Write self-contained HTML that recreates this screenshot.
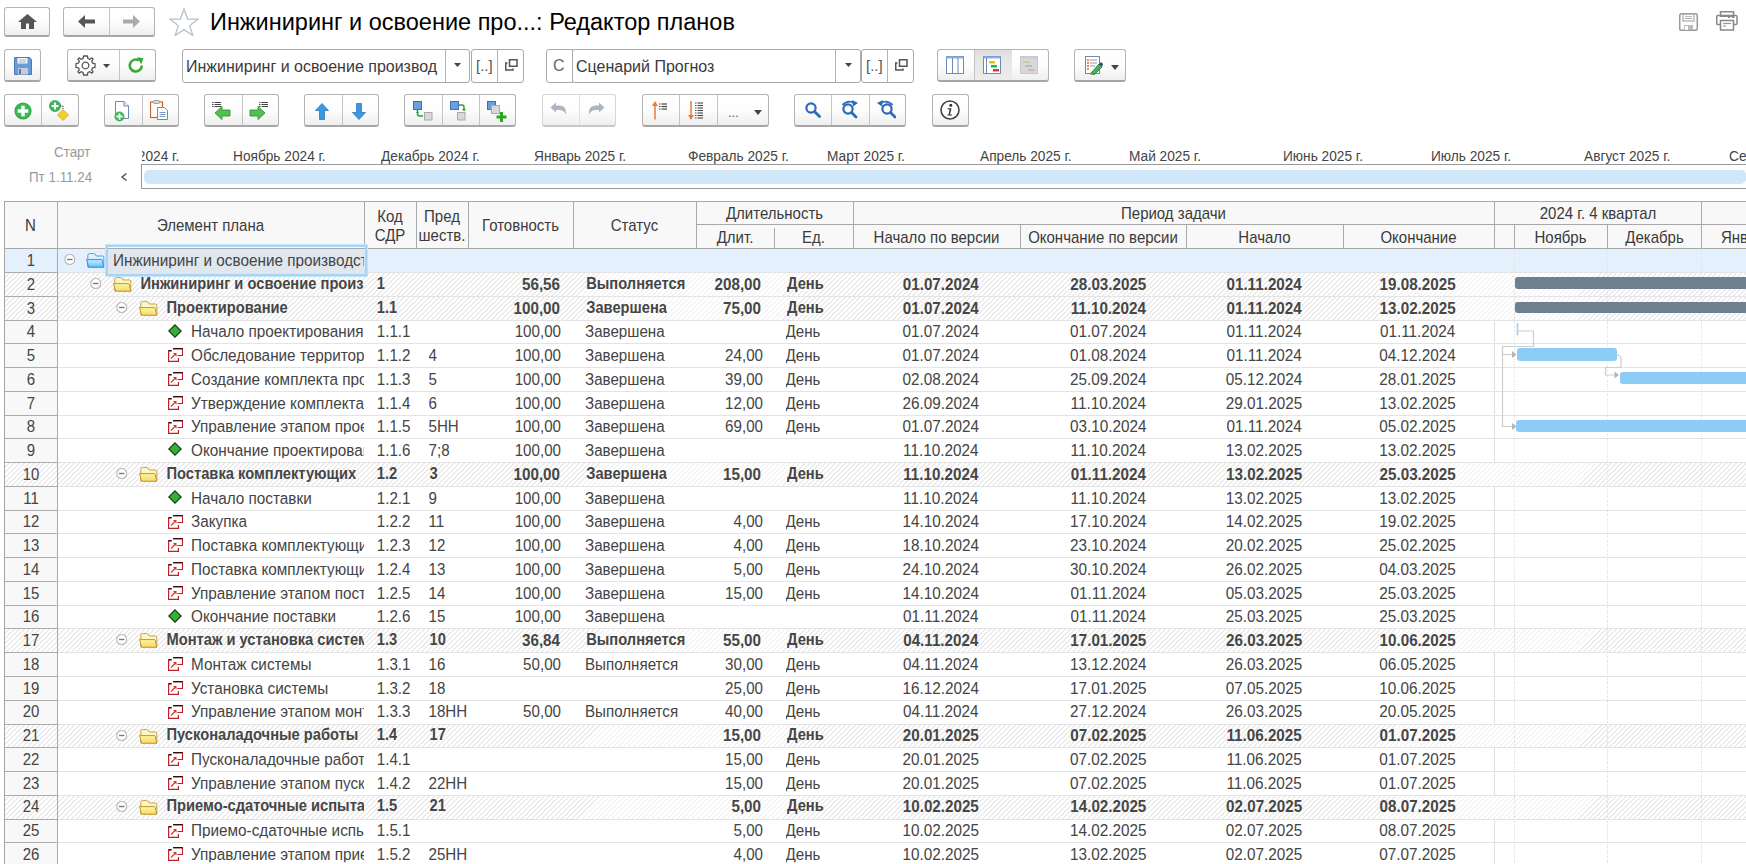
<!DOCTYPE html><html><head><meta charset="utf-8"><title>Редактор планов</title><style>
*{box-sizing:border-box;margin:0;padding:0}
html,body{width:1746px;height:864px;overflow:hidden;background:#fff}
body{position:relative;font-family:"Liberation Sans",sans-serif;color:#333}
.abs{position:absolute}
.btn{position:absolute;border:1px solid #b4b4b4;border-bottom:2px solid #a6a6a6;border-radius:3px;
 background:linear-gradient(#ffffff 0%,#fdfdfd 50%,#efefef 100%);}
.dv{position:absolute;top:0;bottom:0;width:1px;background:#c4c4c4}
.ic{position:absolute}
.fld{position:absolute;border:1px solid #a9a9a9;border-radius:3px;background:#fff}
.t{position:absolute;white-space:nowrap;line-height:1}
.hd{position:absolute;background:#f8f8f8}
.hl{position:absolute;background:#a9a9a9}
.row{position:absolute;left:5px;width:1741px}
.cell{position:absolute;white-space:nowrap;overflow:hidden;font-size:15.15px;line-height:1;transform:scaleY(1.11);transform-origin:0 12.8px;color:#444}
.b{font-weight:bold;color:#464646;font-size:14.7px}
.sy{transform:scaleY(1.12);transform-origin:0 12.7px}
.hatch{background:repeating-linear-gradient(135deg,#ffffff 0px,#ffffff 2.3px,#ebebeb 2.3px,#ebebeb 3.54px)}
.hatch2{background:repeating-linear-gradient(135deg,#ffffff 0px,#ffffff 2.1px,#dedede 2.1px,#dedede 3.54px)}
</style></head><body>
<div class="btn" style="left:4px;top:7px;width:46px;height:30px;"></div>
<svg class="ic" style="left:18px;top:14px" width="19" height="15" viewBox="0 0 19 15"><path d="M9.5 0 L19 8 L16 8 L16 15 L11 15 L11 9.5 L8 9.5 L8 15 L3 15 L3 8 L0 8 Z" fill="#555"/></svg>
<div class="btn" style="left:63px;top:7px;width:92px;height:30px;"><div class="dv" style="left:45px"></div></div>
<svg class="ic" style="left:78px;top:15px" width="18" height="13" viewBox="0 0 18 13"><path d="M0 6.5 L7 0 L7 4.5 L17 4.5 L17 8.5 L7 8.5 L7 13 Z" fill="#555"/></svg>
<svg class="ic" style="left:122px;top:15px" width="18" height="13" viewBox="0 0 18 13"><path d="M18 6.5 L11 0 L11 4.5 L1 4.5 L1 8.5 L11 8.5 L11 13 Z" fill="#aaa"/></svg>
<svg class="ic" style="left:169px;top:8px" width="30" height="28" viewBox="0 0 30 28"><path d="M15 1 L18.6 11 L29 11.2 L20.8 17.6 L23.8 27.5 L15 21.6 L6.2 27.5 L9.2 17.6 L1 11.2 L11.4 11 Z" fill="#fff" stroke="#b9c0ca" stroke-width="1.3" stroke-linejoin="miter"/></svg>
<div class="t" style="left:210px;top:11.2px;font-size:23.5px;color:#000;font-weight:400;">Инжиниринг и освоение про...: Редактор планов</div>
<svg class="ic" style="left:1679px;top:13px" width="19" height="18" viewBox="0 0 19 18"><rect x="0.75" y="0.75" width="17.5" height="16.5" rx="1.5" fill="none" stroke="#999" stroke-width="1.5"/><rect x="4" y="1" width="11" height="7" fill="none" stroke="#aaa" stroke-width="1.2"/><line x1="6" y1="3.5" x2="13" y2="3.5" stroke="#bbb"/><line x1="6" y1="5.5" x2="13" y2="5.5" stroke="#aaa"/><rect x="5" y="12" width="9" height="5" fill="#bbb"/><rect x="6" y="13" width="3" height="4" fill="#fff"/></svg>
<svg class="ic" style="left:1716px;top:11px" width="22" height="20" viewBox="0 0 22 20"><rect x="4.5" y="0.75" width="13" height="4.5" fill="none" stroke="#888" stroke-width="1.5"/><path d="M4 13.5 H1.5 a1 1 0 0 1 -0.75 -0.75 V5.5 a1 1 0 0 1 1 -1 H20 a1 1 0 0 1 1 1 V12.5 a1 1 0 0 1 -1 1 H18" fill="none" stroke="#888" stroke-width="1.5"/><rect x="4.5" y="9.5" width="13" height="9.5" fill="#fff" stroke="#888" stroke-width="1.5"/><line x1="7" y1="12.5" x2="15" y2="12.5" stroke="#999" stroke-width="1.2"/><line x1="7" y1="15" x2="10" y2="15" stroke="#999" stroke-width="1.2"/><line x1="12" y1="6.5" x2="14" y2="6.5" stroke="#888"/><line x1="16" y1="6.5" x2="18.5" y2="6.5" stroke="#888"/></svg>
<div class="btn" style="left:4px;top:49px;width:37px;height:33px;"></div>
<svg class="ic" style="left:14px;top:57px" width="18" height="18" viewBox="0 0 18 18"><path d="M0.5 0.5 H15.5 L17.5 2.5 V17.5 H0.5 Z" fill="#6a9ad8" stroke="#4a78b8"/><rect x="3.5" y="1" width="10" height="5.5" fill="#f4f6fa"/><line x1="5" y1="3" x2="12" y2="3" stroke="#8aa8cc" stroke-width="0.8"/><line x1="5" y1="5" x2="12" y2="5" stroke="#8aa8cc" stroke-width="0.8"/><rect x="4" y="11" width="10" height="6.5" fill="#c8ccd4"/><rect x="5" y="12" width="2" height="5" fill="#4a78b8"/></svg>
<div class="btn" style="left:67px;top:49px;width:89px;height:33px;"><div class="dv" style="left:51px"></div></div>
<svg class="ic" style="left:75px;top:55px" width="21" height="21" viewBox="0 0 21 21"><g transform="translate(10.5,10.5)"><path d="M-1.9 -9.5 H1.9 L2.4 -7 L4.3 -6.2 L6.4 -7.6 L7.6 -6.4 L6.2 -4.3 L7 -2.4 L9.5 -1.9 V1.9 L7 2.4 L6.2 4.3 L7.6 6.4 L6.4 7.6 L4.3 6.2 L2.4 7 L1.9 9.5 H-1.9 L-2.4 7 L-4.3 6.2 L-6.4 7.6 L-7.6 6.4 L-6.2 4.3 L-7 2.4 L-9.5 1.9 V-1.9 L-7 -2.4 L-6.2 -4.3 L-7.6 -6.4 L-6.4 -7.6 L-4.3 -6.2 L-2.4 -7 Z" fill="#fff" stroke="#555" stroke-width="1.3" stroke-linejoin="round"/><circle r="3.3" fill="#fff" stroke="#555" stroke-width="1.3"/></g></svg>
<svg class="ic" style="left:103px;top:64px" width="7" height="4" viewBox="0 0 7 4"><path d="M0 0 H7 L3.5 4 Z" fill="#444"/></svg>
<svg class="ic" style="left:128px;top:57px" width="17" height="18" viewBox="0 0 17 18"><path d="M13.8 8.5 A6 6 0 1 1 10.8 3.3" fill="none" stroke="#3aa83a" stroke-width="2.6"/><path d="M9 0.2 L15.5 1.2 L13.2 7.2 Z" fill="#3aa83a"/></svg>
<div class="fld" style="left:182px;top:49px;width:288px;height:34px"><div class="dv" style="left:262px;background:#b5b5b5"></div></div>
<div class="t" style="left:186px;top:59px;font-size:16px;color:#3a3a3a;font-weight:400;transform:scaleY(1.06);transform-origin:0 13.5px">Инжиниринг и освоение производ</div>
<svg class="ic" style="left:454px;top:63px" width="7" height="4" viewBox="0 0 7 4"><path d="M0 0 H7 L3.5 4 Z" fill="#444"/></svg>
<div class="fld" style="left:471px;top:49px;width:53px;height:34px"><div class="dv" style="left:25px;background:#b5b5b5"></div></div>
<div class="t" style="left:476px;top:58px;font-size:15px;color:#555;font-weight:400;">[..]</div>
<svg class="ic" style="left:505px;top:59px" width="13" height="12" viewBox="0 0 13 12"><rect x="4.5" y="0.75" width="7.5" height="6.5" fill="none" stroke="#555" stroke-width="1.5"/><path d="M2.5 4 H0.75 V11 H8 V9.5" fill="none" stroke="#555" stroke-width="1.5"/></svg>
<div class="fld" style="left:546px;top:49px;width:27px;height:34px;border-radius:3px 0 0 3px"></div>
<div class="t" style="left:553px;top:58px;font-size:16px;color:#666;font-weight:400;">С</div>
<div class="fld" style="left:572px;top:49px;width:289px;height:34px"><div class="dv" style="left:262px;background:#b5b5b5"></div></div>
<div class="t" style="left:576px;top:59px;font-size:16px;color:#3a3a3a;font-weight:400;transform:scaleY(1.06);transform-origin:0 13.5px">Сценарий Прогноз</div>
<svg class="ic" style="left:845px;top:63px" width="7" height="4" viewBox="0 0 7 4"><path d="M0 0 H7 L3.5 4 Z" fill="#444"/></svg>
<div class="fld" style="left:861px;top:49px;width:53px;height:34px"><div class="dv" style="left:25px;background:#b5b5b5"></div></div>
<div class="t" style="left:866px;top:58px;font-size:15px;color:#555;font-weight:400;">[..]</div>
<svg class="ic" style="left:895px;top:59px" width="13" height="12" viewBox="0 0 13 12"><rect x="4.5" y="0.75" width="7.5" height="6.5" fill="none" stroke="#555" stroke-width="1.5"/><path d="M2.5 4 H0.75 V11 H8 V9.5" fill="none" stroke="#555" stroke-width="1.5"/></svg>
<div class="btn" style="left:937px;top:49px;width:112px;height:33px;"><div class="dv" style="left:36px"></div><div class="dv" style="left:73px"></div></div>
<div class="abs" style="left:975px;top:50px;width:37px;height:30px;background:linear-gradient(#dcdcdc,#e6e6e6 30%,#ececec)"></div>
<svg class="ic" style="left:946px;top:56px" width="18" height="18" viewBox="0 0 18 18"><rect x="0.5" y="0.5" width="17" height="17" fill="#fff" stroke="#6d8bb0"/><rect x="0.5" y="0.5" width="17" height="2" fill="#8ab4e0"/><line x1="6.5" y1="2" x2="6.5" y2="17" stroke="#6d8bb0"/><line x1="12" y1="2" x2="12" y2="17" stroke="#6d8bb0"/></svg>
<svg class="ic" style="left:983px;top:56px" width="18" height="18" viewBox="0 0 18 18"><rect x="0.5" y="0.5" width="17" height="17" fill="#fff" stroke="#6d8bb0"/><rect x="0.5" y="0.5" width="17" height="2" fill="#8ab4e0"/><line x1="3.5" y1="2" x2="3.5" y2="17" stroke="#6d8bb0"/><rect x="6" y="5" width="6" height="2.5" fill="#e8c020"/><rect x="8" y="9" width="6" height="2.5" fill="#28b828"/><rect x="10" y="13" width="6" height="2.5" fill="#e03050"/></svg>
<svg class="ic" style="left:1020px;top:56px" width="18" height="18" viewBox="0 0 18 18"><rect x="0.5" y="0.5" width="17" height="17" fill="#d6d8dc" stroke="#c4c8cc"/><rect x="0.5" y="0.5" width="17" height="2" fill="#c8ccd4"/><rect x="3" y="5" width="7" height="2" fill="#d4c896"/><rect x="5" y="9" width="7" height="2" fill="#a8c8a8"/><rect x="8" y="13" width="7" height="2" fill="#d8b0b8"/></svg>
<div class="btn" style="left:1074px;top:49px;width:52px;height:33px;"></div>
<svg class="ic" style="left:1085px;top:56px" width="18" height="19" viewBox="0 0 18 19"><rect x="0.5" y="0.5" width="14" height="17" fill="#fff" stroke="#6d8bb0"/><circle cx="3" cy="4" r="0.9" fill="#e05030"/><circle cx="3" cy="7" r="0.9" fill="#e05030"/><circle cx="3" cy="10" r="0.9" fill="#e05030"/><circle cx="3" cy="13" r="0.9" fill="#e05030"/><line x1="5" y1="4" x2="12" y2="4" stroke="#999"/><line x1="5" y1="7" x2="12" y2="7" stroke="#999"/><line x1="5" y1="10" x2="10" y2="10" stroke="#999"/><path d="M6 17 L14 8 L17 11 L9 19 Z" fill="#3cb850" stroke="#2a7040" stroke-width="0.8"/><path d="M14 8 L16 6 L18 8 L17 11 Z" fill="#2a5070"/><path d="M6 17 L5 19 L8 18.5Z" fill="#b08040"/></svg>
<svg class="ic" style="left:1111px;top:65px" width="8" height="5" viewBox="0 0 8 5"><path d="M0 0 H8 L4 5 Z" fill="#444"/></svg>
<div class="btn" style="left:4px;top:94px;width:75px;height:33px;"><div class="dv" style="left:36px"></div></div>
<svg class="ic" style="left:14px;top:102px" width="18" height="18" viewBox="0 0 18 18"><circle cx="9" cy="9" r="8.6" fill="#2ea84a"/><circle cx="9" cy="9" r="7.6" fill="#3cb85a"/><rect x="7.3" y="3.7" width="3.4" height="10.6" fill="#fff"/><rect x="3.7" y="7.3" width="10.6" height="3.4" fill="#fff"/></svg>
<svg class="ic" style="left:49px;top:100px" width="22" height="22" viewBox="0 0 22 22"><circle cx="6" cy="6" r="5.6" fill="#3cb85a" stroke="#2a9a48" stroke-width="0.6"/><rect x="5" y="2.6" width="2" height="6.8" fill="#fff"/><rect x="2.6" y="5" width="6.8" height="2" fill="#fff"/><line x1="11.5" y1="6" x2="14" y2="6" stroke="#333" stroke-width="1" stroke-dasharray="1 1"/><line x1="14" y1="6" x2="14" y2="10" stroke="#333" stroke-width="1" stroke-dasharray="1 1"/><path d="M14 9.5 L19.5 15 L14 20.5 L8.5 15 Z" fill="#f0d030" stroke="#d0a818" stroke-width="0.8"/></svg>
<div class="btn" style="left:104px;top:94px;width:75px;height:33px;"><div class="dv" style="left:37px"></div></div>
<svg class="ic" style="left:114px;top:101px" width="16" height="21" viewBox="0 0 16 21"><path d="M1.5 0.5 H10 L14.5 5 V17.5 H1.5 Z" fill="#fff" stroke="#6d8bb0"/><path d="M10 0.5 V5 H14.5" fill="#e8eef6" stroke="#6d8bb0"/><circle cx="5.5" cy="15.5" r="5" fill="#3cb85a"/><rect x="4.6" y="12.4" width="1.8" height="6.2" fill="#fff"/><rect x="2.4" y="14.6" width="6.2" height="1.8" fill="#fff"/></svg>
<svg class="ic" style="left:150px;top:100px" width="19" height="20" viewBox="0 0 19 20"><rect x="0.5" y="2" width="12" height="15.5" fill="#fff" stroke="#c86428" stroke-width="1.2"/><rect x="3.5" y="0.5" width="6" height="3" rx="1" fill="#ddd" stroke="#888" stroke-width="0.8"/><path d="M7.5 7.5 H14.5 L17.5 10.5 V19.5 H7.5 Z" fill="#fff" stroke="#6d8bb0"/><line x1="9.5" y1="12.5" x2="15.5" y2="12.5" stroke="#7a9ac0"/><line x1="9.5" y1="14.5" x2="15.5" y2="14.5" stroke="#7a9ac0"/><line x1="9.5" y1="16.5" x2="15.5" y2="16.5" stroke="#7a9ac0"/></svg>
<div class="btn" style="left:204px;top:94px;width:75px;height:33px;"><div class="dv" style="left:37px"></div></div>
<svg class="ic" style="left:212px;top:101px" width="22" height="19" viewBox="0 0 22 19"><g stroke="#444" stroke-width="1"><line x1="0" y1="1.5" x2="1.5" y2="1.5"/><line x1="2.5" y1="1.5" x2="9" y2="1.5"/><line x1="0" y1="3.5" x2="1.5" y2="3.5"/><line x1="2.5" y1="3.5" x2="9" y2="3.5"/><line x1="0" y1="5.5" x2="1.5" y2="5.5"/><line x1="2.5" y1="5.5" x2="9" y2="5.5"/></g><path d="M3 12 L10 5.5 V9 H18 V15 H10 V18.5 Z" fill="#50c050" stroke="#2a9a38" stroke-width="0.9"/></svg>
<svg class="ic" style="left:247px;top:101px" width="22" height="19" viewBox="0 0 22 19"><g stroke="#444" stroke-width="1"><line x1="12" y1="1.5" x2="13.5" y2="1.5"/><line x1="14.5" y1="1.5" x2="21" y2="1.5"/><line x1="12" y1="3.5" x2="13.5" y2="3.5"/><line x1="14.5" y1="3.5" x2="21" y2="3.5"/><line x1="12" y1="5.5" x2="13.5" y2="5.5"/><line x1="14.5" y1="5.5" x2="21" y2="5.5"/></g><path d="M18 12 L11 5.5 V9 H3 V15 H11 V18.5 Z" fill="#50c050" stroke="#2a9a38" stroke-width="0.9"/></svg>
<div class="btn" style="left:304px;top:94px;width:75px;height:33px;"><div class="dv" style="left:37px"></div></div>
<svg class="ic" style="left:315px;top:103px" width="14" height="17" viewBox="0 0 14 17"><path d="M7 0.5 L13.5 7.5 H9.5 V16.5 H4.5 V7.5 H0.5 Z" fill="#3a98e0" stroke="#2a78c0" stroke-width="0.8"/></svg>
<svg class="ic" style="left:352px;top:103px" width="14" height="17" viewBox="0 0 14 17"><path d="M7 16.5 L13.5 9.5 H9.5 V0.5 H4.5 V9.5 H0.5 Z" fill="#3a98e0" stroke="#2a78c0" stroke-width="0.8"/></svg>
<div class="btn" style="left:404px;top:94px;width:112px;height:33px;"><div class="dv" style="left:37px"></div><div class="dv" style="left:74px"></div></div>
<svg class="ic" style="left:413px;top:101px" width="20" height="20" viewBox="0 0 20 20"><rect x="0.5" y="0.5" width="8" height="8" fill="#6aa0e0" stroke="#3a70b8"/><rect x="11.5" y="11.5" width="7.5" height="7.5" fill="#d8d8d8" stroke="#aaa"/><path d="M4.5 9 V13 Q4.5 15 7 15 H10" fill="none" stroke="#30a030" stroke-width="1.5"/><path d="M3 12 L4.5 9.5 L6 12 Z" fill="#30a030"/></svg>
<svg class="ic" style="left:450px;top:101px" width="20" height="20" viewBox="0 0 20 20"><rect x="0.5" y="0.5" width="8" height="8" fill="#6aa0e0" stroke="#3a70b8"/><rect x="7.5" y="11.5" width="7.5" height="7.5" fill="#d8d8d8" stroke="#aaa"/><path d="M9 4 H12 Q14 4 14 6 V9" fill="none" stroke="#30a030" stroke-width="1.5"/><path d="M12 8 L14 10.5 L16 8 Z" fill="#30a030"/></svg>
<svg class="ic" style="left:487px;top:101px" width="22" height="22" viewBox="0 0 22 22"><rect x="0.5" y="0.5" width="8" height="8" fill="#6aa0e0" stroke="#3a70b8"/><rect x="4.5" y="4.5" width="8" height="8" fill="#d8d8d8" stroke="#aaa"/><rect x="13" y="11" width="3" height="10" fill="#22aa22"/><rect x="9.5" y="14.5" width="10" height="3" fill="#22aa22"/></svg>
<div class="btn" style="left:542px;top:94px;width:74px;height:33px;border-color:#d6d6d6;border-bottom-color:#c8c8c8"><div class="dv" style="left:36px;background:#e0e0e0"></div></div>
<svg class="ic" style="left:550px;top:102px" width="17" height="13" viewBox="0 0 17 13"><path d="M0.5 5.5 L6 0.5 V3.5 H9 Q16 3.5 16 10 V12.5 Q14 8 9 8 H6 V10.5 Z" fill="#adb6c0"/></svg>
<svg class="ic" style="left:588px;top:102px" width="17" height="13" viewBox="0 0 17 13"><path d="M16.5 5.5 L11 0.5 V3.5 H8 Q1 3.5 1 10 V12.5 Q3 8 8 8 H11 V10.5 Z" fill="#adb6c0"/></svg>
<div class="btn" style="left:642px;top:94px;width:127px;height:33px;"><div class="dv" style="left:36px"></div><div class="dv" style="left:74px"></div></div>
<svg class="ic" style="left:652px;top:101px" width="21" height="19" viewBox="0 0 21 19"><line x1="3" y1="2" x2="3" y2="18.5" stroke="#f07830" stroke-width="1.5"/><path d="M0 5 L3 0 L6 5 Z" fill="#f07830"/><g stroke="#444" stroke-width="1.2"><line x1="7" y1="3" x2="8.5" y2="3"/><line x1="9.5" y1="3" x2="15" y2="3"/><line x1="7" y1="5.5" x2="8.5" y2="5.5"/><line x1="9.5" y1="5.5" x2="15" y2="5.5"/><line x1="7" y1="8" x2="8.5" y2="8"/><line x1="9.5" y1="8" x2="15" y2="8"/></g></svg>
<svg class="ic" style="left:688px;top:101px" width="21" height="19" viewBox="0 0 21 19"><line x1="3" y1="0" x2="3" y2="16" stroke="#f07830" stroke-width="1.5"/><path d="M0 14 L3 19 L6 14 Z" fill="#f07830"/><g stroke="#444" stroke-width="1.1"><line x1="7" y1="2" x2="8.5" y2="2"/><line x1="9.5" y1="2" x2="15" y2="2"/><line x1="7" y1="4.5" x2="8.5" y2="4.5"/><line x1="9.5" y1="4.5" x2="15" y2="4.5"/><line x1="7" y1="7" x2="8.5" y2="7"/><line x1="9.5" y1="7" x2="15" y2="7"/><line x1="7" y1="9.5" x2="8.5" y2="9.5"/><line x1="9.5" y1="9.5" x2="15" y2="9.5"/><line x1="7" y1="12" x2="8.5" y2="12"/><line x1="9.5" y1="12" x2="15" y2="12"/><line x1="7" y1="14.5" x2="8.5" y2="14.5"/><line x1="9.5" y1="14.5" x2="15" y2="14.5"/><line x1="7" y1="17" x2="8.5" y2="17"/><line x1="9.5" y1="17" x2="15" y2="17"/></g></svg>
<div class="t" style="left:728px;top:106px;font-size:13px;color:#555;font-weight:400;">...</div>
<svg class="ic" style="left:754px;top:110px" width="8" height="5" viewBox="0 0 8 5"><path d="M0 0 H8 L4 5 Z" fill="#444"/></svg>
<div class="btn" style="left:794px;top:94px;width:112px;height:33px;"><div class="dv" style="left:36px"></div><div class="dv" style="left:74px"></div></div>
<svg class="ic" style="left:805px;top:102px" width="16" height="16" viewBox="0 0 16 16"><circle cx="6" cy="6" r="4.6" fill="none" stroke="#2a6ab8" stroke-width="2.2"/><line x1="9.5" y1="9.5" x2="14.5" y2="14.5" stroke="#2a6ab8" stroke-width="2.8" stroke-linecap="round"/></svg>
<svg class="ic" style="left:841px;top:100px" width="19" height="19" viewBox="0 0 19 19"><circle cx="7" cy="9" r="4.6" fill="none" stroke="#2a6ab8" stroke-width="2.2"/><line x1="10.5" y1="12.5" x2="15" y2="17" stroke="#2a6ab8" stroke-width="2.8" stroke-linecap="round"/><path d="M1.5 5 Q7 -0.5 13 3" fill="none" stroke="#2a6ab8" stroke-width="1.8"/><path d="M11 0 L17 3 L12 6.5 Z" fill="#2a6ab8"/></svg>
<svg class="ic" style="left:877px;top:100px" width="19" height="19" viewBox="0 0 19 19"><circle cx="10" cy="9" r="4.6" fill="none" stroke="#2a6ab8" stroke-width="2.2"/><line x1="13.5" y1="12.5" x2="18" y2="17" stroke="#2a6ab8" stroke-width="2.8" stroke-linecap="round"/><path d="M15.5 5 Q10 -0.5 4 3" fill="none" stroke="#2a6ab8" stroke-width="1.8"/><path d="M6 0 L0 3 L5 6.5 Z" fill="#2a6ab8"/></svg>
<div class="btn" style="left:932px;top:94px;width:37px;height:33px;"></div>
<svg class="ic" style="left:940px;top:100px" width="20" height="20" viewBox="0 0 20 20"><circle cx="10" cy="10" r="9" fill="#fff" stroke="#444" stroke-width="1.6"/><circle cx="10.8" cy="5.2" r="1.5" fill="#333"/><path d="M7.5 8.2 H11.5 L10 14.5 H12 V15.5 H7.5 V14.5 H8.6 L9.6 9.2 H7.5 Z" fill="#333"/></svg>
<div class="t" style="left:54px;top:146px;font-size:13.4px;color:#999;font-weight:400;transform:scaleY(1.08);transform-origin:0 11.35px">Старт</div>
<div class="t" style="left:29px;top:171px;font-size:13.4px;color:#999;font-weight:400;transform:scaleY(1.08);transform-origin:0 11.35px">Пт 1.11.24</div>
<svg class="ic" style="left:121px;top:173px" width="6" height="8" viewBox="0 0 6 8"><path d="M5.5 0.5 L1 4 L5.5 7.5" fill="none" stroke="#444" stroke-width="1.3"/></svg>
<div class="abs" style="left:141.75px;top:140px;width:1605px;height:24px;overflow:hidden">
<div class="t" style="left:-60.75px;top:10.3px;font-size:13.7px;color:#444;font-weight:400;transform:scaleY(1.1);transform-origin:0 11.6px">Октябрь 2024 г.</div>
<div class="t" style="left:91.25px;top:10.3px;font-size:13.7px;color:#444;font-weight:400;transform:scaleY(1.1);transform-origin:0 11.6px">Ноябрь 2024 г.</div>
<div class="t" style="left:239.25px;top:10.3px;font-size:13.7px;color:#444;font-weight:400;transform:scaleY(1.1);transform-origin:0 11.6px">Декабрь 2024 г.</div>
<div class="t" style="left:392.25px;top:10.3px;font-size:13.7px;color:#444;font-weight:400;transform:scaleY(1.1);transform-origin:0 11.6px">Январь 2025 г.</div>
<div class="t" style="left:546.25px;top:10.3px;font-size:13.7px;color:#444;font-weight:400;transform:scaleY(1.1);transform-origin:0 11.6px">Февраль 2025 г.</div>
<div class="t" style="left:685.25px;top:10.3px;font-size:13.7px;color:#444;font-weight:400;transform:scaleY(1.1);transform-origin:0 11.6px">Март 2025 г.</div>
<div class="t" style="left:838.25px;top:10.3px;font-size:13.7px;color:#444;font-weight:400;transform:scaleY(1.1);transform-origin:0 11.6px">Апрель 2025 г.</div>
<div class="t" style="left:987.25px;top:10.3px;font-size:13.7px;color:#444;font-weight:400;transform:scaleY(1.1);transform-origin:0 11.6px">Май 2025 г.</div>
<div class="t" style="left:1141.25px;top:10.3px;font-size:13.7px;color:#444;font-weight:400;transform:scaleY(1.1);transform-origin:0 11.6px">Июнь 2025 г.</div>
<div class="t" style="left:1289.25px;top:10.3px;font-size:13.7px;color:#444;font-weight:400;transform:scaleY(1.1);transform-origin:0 11.6px">Июль 2025 г.</div>
<div class="t" style="left:1442.25px;top:10.3px;font-size:13.7px;color:#444;font-weight:400;transform:scaleY(1.1);transform-origin:0 11.6px">Август 2025 г.</div>
<div class="t" style="left:1587.25px;top:10.3px;font-size:13.7px;color:#444;font-weight:400;transform:scaleY(1.1);transform-origin:0 11.6px">Сентябрь 2025 г.</div>
</div>
<div class="abs" style="left:141px;top:164px;width:1620px;height:25px;border:1px solid #9a9a9a;border-right:none;background:#fff"></div>
<div class="abs" style="left:144px;top:170px;width:1602px;height:14px;border-radius:5px;background:#cfe7f9"></div>
<div class="hd" style="left:4px;top:201px;width:1742px;height:47px"></div>
<div class="abs" style="left:1494px;top:248px;width:1px;height:616px;background:#dedede"></div>
<div class="abs" style="left:5px;top:249px;width:1741px;height:23px;background:#e4f1fc"></div>
<div class="abs" style="left:5px;top:272px;width:52px;height:1px;background:#ababab"></div>
<div class="abs" style="left:57px;top:272px;width:1689px;height:1px;background:#e4e4e4"></div>
<div class="abs hatch" style="left:5px;top:273px;width:1741px;height:23px"></div>
<div class="abs" style="left:5px;top:296px;width:52px;height:1px;background:#ababab"></div>
<div class="abs" style="left:57px;top:296px;width:1689px;height:1px;background:#e4e4e4"></div>
<div class="abs hatch" style="left:5px;top:297px;width:1741px;height:23px"></div>
<div class="abs" style="left:5px;top:320px;width:52px;height:1px;background:#ababab"></div>
<div class="abs" style="left:57px;top:320px;width:1689px;height:1px;background:#e4e4e4"></div>
<div class="abs" style="left:5px;top:321px;width:52px;height:22px;background:#f8f8f8"></div>
<div class="abs" style="left:5px;top:343px;width:52px;height:1px;background:#ababab"></div>
<div class="abs" style="left:57px;top:343px;width:1689px;height:1px;background:#e4e4e4"></div>
<div class="abs" style="left:5px;top:344px;width:52px;height:23px;background:#f8f8f8"></div>
<div class="abs" style="left:5px;top:367px;width:52px;height:1px;background:#ababab"></div>
<div class="abs" style="left:57px;top:367px;width:1689px;height:1px;background:#e4e4e4"></div>
<div class="abs" style="left:5px;top:368px;width:52px;height:23px;background:#f8f8f8"></div>
<div class="abs" style="left:5px;top:391px;width:52px;height:1px;background:#ababab"></div>
<div class="abs" style="left:57px;top:391px;width:1689px;height:1px;background:#e4e4e4"></div>
<div class="abs" style="left:5px;top:392px;width:52px;height:23px;background:#f8f8f8"></div>
<div class="abs" style="left:5px;top:415px;width:52px;height:1px;background:#ababab"></div>
<div class="abs" style="left:57px;top:415px;width:1689px;height:1px;background:#e4e4e4"></div>
<div class="abs" style="left:5px;top:416px;width:52px;height:22px;background:#f8f8f8"></div>
<div class="abs" style="left:5px;top:438px;width:52px;height:1px;background:#ababab"></div>
<div class="abs" style="left:57px;top:438px;width:1689px;height:1px;background:#e4e4e4"></div>
<div class="abs" style="left:5px;top:439px;width:52px;height:23px;background:#f8f8f8"></div>
<div class="abs" style="left:5px;top:462px;width:52px;height:1px;background:#ababab"></div>
<div class="abs" style="left:57px;top:462px;width:1689px;height:1px;background:#e4e4e4"></div>
<div class="abs hatch" style="left:5px;top:463px;width:1741px;height:23px"></div>
<div class="abs" style="left:5px;top:486px;width:52px;height:1px;background:#ababab"></div>
<div class="abs" style="left:57px;top:486px;width:1689px;height:1px;background:#e4e4e4"></div>
<div class="abs" style="left:5px;top:487px;width:52px;height:23px;background:#f8f8f8"></div>
<div class="abs" style="left:5px;top:510px;width:52px;height:1px;background:#ababab"></div>
<div class="abs" style="left:57px;top:510px;width:1689px;height:1px;background:#e4e4e4"></div>
<div class="abs" style="left:5px;top:511px;width:52px;height:22px;background:#f8f8f8"></div>
<div class="abs" style="left:5px;top:533px;width:52px;height:1px;background:#ababab"></div>
<div class="abs" style="left:57px;top:533px;width:1689px;height:1px;background:#e4e4e4"></div>
<div class="abs" style="left:5px;top:534px;width:52px;height:23px;background:#f8f8f8"></div>
<div class="abs" style="left:5px;top:557px;width:52px;height:1px;background:#ababab"></div>
<div class="abs" style="left:57px;top:557px;width:1689px;height:1px;background:#e4e4e4"></div>
<div class="abs" style="left:5px;top:558px;width:52px;height:23px;background:#f8f8f8"></div>
<div class="abs" style="left:5px;top:581px;width:52px;height:1px;background:#ababab"></div>
<div class="abs" style="left:57px;top:581px;width:1689px;height:1px;background:#e4e4e4"></div>
<div class="abs" style="left:5px;top:582px;width:52px;height:23px;background:#f8f8f8"></div>
<div class="abs" style="left:5px;top:605px;width:52px;height:1px;background:#ababab"></div>
<div class="abs" style="left:57px;top:605px;width:1689px;height:1px;background:#e4e4e4"></div>
<div class="abs" style="left:5px;top:606px;width:52px;height:22px;background:#f8f8f8"></div>
<div class="abs" style="left:5px;top:628px;width:52px;height:1px;background:#ababab"></div>
<div class="abs" style="left:57px;top:628px;width:1689px;height:1px;background:#e4e4e4"></div>
<div class="abs hatch" style="left:5px;top:629px;width:1741px;height:23px"></div>
<div class="abs" style="left:5px;top:652px;width:52px;height:1px;background:#ababab"></div>
<div class="abs" style="left:57px;top:652px;width:1689px;height:1px;background:#e4e4e4"></div>
<div class="abs" style="left:5px;top:653px;width:52px;height:23px;background:#f8f8f8"></div>
<div class="abs" style="left:5px;top:676px;width:52px;height:1px;background:#ababab"></div>
<div class="abs" style="left:57px;top:676px;width:1689px;height:1px;background:#e4e4e4"></div>
<div class="abs" style="left:5px;top:677px;width:52px;height:23px;background:#f8f8f8"></div>
<div class="abs" style="left:5px;top:700px;width:52px;height:1px;background:#ababab"></div>
<div class="abs" style="left:57px;top:700px;width:1689px;height:1px;background:#e4e4e4"></div>
<div class="abs" style="left:5px;top:701px;width:52px;height:23px;background:#f8f8f8"></div>
<div class="abs" style="left:5px;top:724px;width:52px;height:1px;background:#ababab"></div>
<div class="abs" style="left:57px;top:724px;width:1689px;height:1px;background:#e4e4e4"></div>
<div class="abs hatch" style="left:5px;top:725px;width:1741px;height:22px"></div>
<div class="abs" style="left:5px;top:747px;width:52px;height:1px;background:#ababab"></div>
<div class="abs" style="left:57px;top:747px;width:1689px;height:1px;background:#e4e4e4"></div>
<div class="abs" style="left:5px;top:748px;width:52px;height:23px;background:#f8f8f8"></div>
<div class="abs" style="left:5px;top:771px;width:52px;height:1px;background:#ababab"></div>
<div class="abs" style="left:57px;top:771px;width:1689px;height:1px;background:#e4e4e4"></div>
<div class="abs" style="left:5px;top:772px;width:52px;height:23px;background:#f8f8f8"></div>
<div class="abs" style="left:5px;top:795px;width:52px;height:1px;background:#ababab"></div>
<div class="abs" style="left:57px;top:795px;width:1689px;height:1px;background:#e4e4e4"></div>
<div class="abs hatch" style="left:5px;top:796px;width:1741px;height:23px"></div>
<div class="abs" style="left:5px;top:819px;width:52px;height:1px;background:#ababab"></div>
<div class="abs" style="left:57px;top:819px;width:1689px;height:1px;background:#e4e4e4"></div>
<div class="abs" style="left:5px;top:820px;width:52px;height:22px;background:#f8f8f8"></div>
<div class="abs" style="left:5px;top:842px;width:52px;height:1px;background:#ababab"></div>
<div class="abs" style="left:57px;top:842px;width:1689px;height:1px;background:#e4e4e4"></div>
<div class="abs" style="left:5px;top:843px;width:52px;height:23px;background:#f8f8f8"></div>
<div class="abs" style="left:5px;top:866px;width:52px;height:1px;background:#ababab"></div>
<div class="abs" style="left:57px;top:866px;width:1689px;height:1px;background:#e4e4e4"></div>
<div class="abs" style="left:4px;top:201px;width:1px;height:663px;background:#a5a5a5"></div>
<div class="abs" style="left:4px;top:201px;width:1742px;height:1px;background:#a9a9a9"></div>
<div class="abs" style="left:4px;top:248px;width:1742px;height:1px;background:#a9a9a9"></div>
<div class="abs" style="left:57px;top:201px;width:1px;height:663px;background:#a9a9a9"></div>
<div class="abs" style="left:364px;top:201px;width:1px;height:47px;background:#a9a9a9"></div>
<div class="abs" style="left:416px;top:201px;width:1px;height:47px;background:#a9a9a9"></div>
<div class="abs" style="left:468px;top:201px;width:1px;height:47px;background:#a9a9a9"></div>
<div class="abs" style="left:573px;top:201px;width:1px;height:47px;background:#a9a9a9"></div>
<div class="abs" style="left:696px;top:201px;width:1px;height:47px;background:#a9a9a9"></div>
<div class="abs" style="left:853px;top:201px;width:1px;height:47px;background:#a9a9a9"></div>
<div class="abs" style="left:1494px;top:201px;width:1px;height:47px;background:#a9a9a9"></div>
<div class="abs" style="left:1701px;top:201px;width:1px;height:47px;background:#a9a9a9"></div>
<div class="abs" style="left:774px;top:228px;width:1px;height:20px;background:#a9a9a9"></div>
<div class="abs" style="left:1020px;top:224px;width:1px;height:24px;background:#a9a9a9"></div>
<div class="abs" style="left:1186px;top:224px;width:1px;height:24px;background:#a9a9a9"></div>
<div class="abs" style="left:1343px;top:224px;width:1px;height:24px;background:#a9a9a9"></div>
<div class="abs" style="left:1514px;top:224px;width:1px;height:24px;background:#a9a9a9"></div>
<div class="abs" style="left:1607px;top:224px;width:1px;height:24px;background:#a9a9a9"></div>
<div class="abs" style="left:696px;top:224px;width:1050px;height:1px;background:#a9a9a9"></div>
<div class="abs" style="left:1514px;top:249px;width:1px;height:616px;background:repeating-linear-gradient(#e0e0e0 0 1px,transparent 1px 2.5px)"></div>
<div class="abs" style="left:1607px;top:249px;width:1px;height:616px;background:repeating-linear-gradient(#e0e0e0 0 1px,transparent 1px 2.5px)"></div>
<div class="abs" style="left:1701px;top:249px;width:1px;height:616px;background:repeating-linear-gradient(#e0e0e0 0 1px,transparent 1px 2.5px)"></div>
<div class="t sy" style="left:-119.5px;width:300px;text-align:center;top:217.5px;font-size:15px;color:#3a3a3a">N</div>
<div class="t sy" style="left:60.5px;width:300px;text-align:center;top:217.5px;font-size:15px;color:#3a3a3a">Элемент плана</div>
<div class="t sy" style="left:240px;width:300px;text-align:center;top:208.8px;font-size:15px;color:#3a3a3a">Код</div>
<div class="t sy" style="left:240px;width:300px;text-align:center;top:227.7px;font-size:15px;color:#3a3a3a">СДР</div>
<div class="t sy" style="left:292px;width:300px;text-align:center;top:208.8px;font-size:15px;color:#3a3a3a">Пред</div>
<div class="t sy" style="left:292px;width:300px;text-align:center;top:227.7px;font-size:15px;color:#3a3a3a">шеств.</div>
<div class="t sy" style="left:370.5px;width:300px;text-align:center;top:217.5px;font-size:15px;color:#3a3a3a">Готовность</div>
<div class="t sy" style="left:484.5px;width:300px;text-align:center;top:217.5px;font-size:15px;color:#3a3a3a">Статус</div>
<div class="t sy" style="left:624.5px;width:300px;text-align:center;top:205.6px;font-size:15px;color:#3a3a3a">Длительность</div>
<div class="t sy" style="left:585px;width:300px;text-align:center;top:229.8px;font-size:15px;color:#3a3a3a">Длит.</div>
<div class="t sy" style="left:663.5px;width:300px;text-align:center;top:229.8px;font-size:15px;color:#3a3a3a">Ед.</div>
<div class="t sy" style="left:1023.5px;width:300px;text-align:center;top:205.6px;font-size:15px;color:#3a3a3a">Период задачи</div>
<div class="t sy" style="left:786.5px;width:300px;text-align:center;top:229.8px;font-size:15px;color:#3a3a3a">Начало по версии</div>
<div class="t sy" style="left:953px;width:300px;text-align:center;top:229.8px;font-size:15px;color:#3a3a3a">Окончание по версии</div>
<div class="t sy" style="left:1114.5px;width:300px;text-align:center;top:229.8px;font-size:15px;color:#3a3a3a">Начало</div>
<div class="t sy" style="left:1268.5px;width:300px;text-align:center;top:229.8px;font-size:15px;color:#3a3a3a">Окончание</div>
<div class="t sy" style="left:1448px;width:300px;text-align:center;top:205.6px;font-size:15px;color:#3a3a3a">2024 г. 4 квартал</div>
<div class="t sy" style="left:1410.5px;width:300px;text-align:center;top:229.8px;font-size:15px;color:#3a3a3a">Ноябрь</div>
<div class="t sy" style="left:1504.5px;width:300px;text-align:center;top:229.8px;font-size:15px;color:#3a3a3a">Декабрь</div>
<div class="t sy" style="left:1721px;top:229.8px;font-size:15px;color:#3a3a3a">Январь</div>
<div class="abs" style="left:105px;top:244px;width:263px;height:33px;border:1px solid #c4e4fa;background:#e0e7ef"><div class="abs" style="left:0;top:0;right:0;bottom:0;border:2px solid #a6d4f6"></div></div>
<div class="abs" style="left:108px;top:248px;width:257px;height:1px;background:#a9a9a9"></div>
<div class="abs" style="left:108px;top:247px;width:257px;height:1px;background:#fafafa"></div>
<div class="cell" style="left:5px;top:253.0px;line-height:1;width:52px;text-align:center;font-weight:normal;color:#444;font-size:15px">1</div>
<svg class="ic" style="left:64px;top:254px" width="12" height="11" viewBox="0 0 12 11"><circle cx="5.75" cy="5.5" r="5" fill="#fff" stroke="#bdbdbd" stroke-width="1.2"/><line x1="3" y1="5.5" x2="8.5" y2="5.5" stroke="#7a7a7a" stroke-width="1.4"/></svg>
<svg class="ic" style="left:86px;top:252.5px" width="19" height="15" viewBox="0 0 19 15"><defs><linearGradient id="fb" x1="0" y1="0" x2="0" y2="1"><stop offset="0" stop-color="#c8ecff"/><stop offset="1" stop-color="#60c4f8"/></linearGradient><linearGradient id="fbb" x1="0" y1="0" x2="0" y2="1"><stop offset="0" stop-color="#e8f8ff"/><stop offset="1" stop-color="#a8def8"/></linearGradient></defs><path d="M1.8 14 V2.5 Q1.8 0.6 3.6 0.6 H7.6 Q9 0.6 9.6 2 L10.2 3 H16.6 Q17.8 3 17.8 4.2 V14 Z" fill="url(#fbb)" stroke="#4a9ee8" stroke-width="1"/><path d="M0.6 6.6 H15.4 Q16 6.6 16.2 7.4 L17.8 14.2 H2.6 Z" fill="url(#fb)" stroke="#3a8ee0" stroke-width="1"/></svg>
<div class="cell" style="left:113px;top:253.0px;line-height:1;width:251px;overflow:hidden;font-size:15.3px">Инжиниринг и освоение производственного цикла</div>
<div class="cell b" style="left:5px;top:276.8px;line-height:1;width:52px;text-align:center;font-weight:normal;color:#444;font-size:15px">2</div>
<svg class="ic" style="left:90px;top:278px" width="12" height="11" viewBox="0 0 12 11"><circle cx="5.75" cy="5.5" r="5" fill="#fff" stroke="#bdbdbd" stroke-width="1.2"/><line x1="3" y1="5.5" x2="8.5" y2="5.5" stroke="#7a7a7a" stroke-width="1.4"/></svg>
<svg class="ic" style="left:113px;top:276.5px" width="19" height="15" viewBox="0 0 19 15"><defs><linearGradient id="fy" x1="0" y1="0" x2="0" y2="1"><stop offset="0" stop-color="#fbf7a0"/><stop offset="1" stop-color="#f8d868"/></linearGradient><linearGradient id="fyb" x1="0" y1="0" x2="0" y2="1"><stop offset="0" stop-color="#fffbd8"/><stop offset="1" stop-color="#f4e8a0"/></linearGradient></defs><path d="M1.8 14 V2.5 Q1.8 0.6 3.6 0.6 H7.6 Q9 0.6 9.6 2 L10.2 3 H16.6 Q17.8 3 17.8 4.2 V14 Z" fill="url(#fyb)" stroke="#c8a040" stroke-width="1"/><path d="M0.6 6.6 H15.4 Q16 6.6 16.2 7.4 L17.8 14.2 H2.6 Z" fill="url(#fy)" stroke="#c09838" stroke-width="1"/></svg>
<div class="cell b" style="left:140.5px;top:276.8px;line-height:1;width:223.5px;overflow:hidden">Инжиниринг и освоение производства</div>
<div class="cell b" style="left:376.8px;top:276.8px;line-height:1;">1</div>
<div class="cell b" style="left:360px;width:200px;text-align:right;top:276.8px;line-height:1;font-size:15.2px">56,56</div>
<div class="cell b" style="left:586.2px;top:276.8px;line-height:1;">Выполняется</div>
<div class="cell b" style="left:561px;width:200px;text-align:right;top:276.8px;line-height:1;font-size:15.2px">208,00</div>
<div class="cell b" style="left:787px;top:276.8px;line-height:1;">День</div>
<div class="cell b" style="left:840.8px;width:200px;text-align:center;top:276.8px;line-height:1;font-size:15.2px">01.07.2024</div>
<div class="cell b" style="left:1008.3px;width:200px;text-align:center;top:276.8px;line-height:1;font-size:15.2px">28.03.2025</div>
<div class="cell b" style="left:1164.1px;width:200px;text-align:center;top:276.8px;line-height:1;font-size:15.2px">01.11.2024</div>
<div class="cell b" style="left:1317.6px;width:200px;text-align:center;top:276.8px;line-height:1;font-size:15.2px">19.08.2025</div>
<div class="cell b" style="left:5px;top:300.5px;line-height:1;width:52px;text-align:center;font-weight:normal;color:#444;font-size:15px">3</div>
<svg class="ic" style="left:116px;top:302px" width="12" height="11" viewBox="0 0 12 11"><circle cx="5.75" cy="5.5" r="5" fill="#fff" stroke="#bdbdbd" stroke-width="1.2"/><line x1="3" y1="5.5" x2="8.5" y2="5.5" stroke="#7a7a7a" stroke-width="1.4"/></svg>
<svg class="ic" style="left:139px;top:300.5px" width="19" height="15" viewBox="0 0 19 15"><defs><linearGradient id="fy" x1="0" y1="0" x2="0" y2="1"><stop offset="0" stop-color="#fbf7a0"/><stop offset="1" stop-color="#f8d868"/></linearGradient><linearGradient id="fyb" x1="0" y1="0" x2="0" y2="1"><stop offset="0" stop-color="#fffbd8"/><stop offset="1" stop-color="#f4e8a0"/></linearGradient></defs><path d="M1.8 14 V2.5 Q1.8 0.6 3.6 0.6 H7.6 Q9 0.6 9.6 2 L10.2 3 H16.6 Q17.8 3 17.8 4.2 V14 Z" fill="url(#fyb)" stroke="#c8a040" stroke-width="1"/><path d="M0.6 6.6 H15.4 Q16 6.6 16.2 7.4 L17.8 14.2 H2.6 Z" fill="url(#fy)" stroke="#c09838" stroke-width="1"/></svg>
<div class="cell b" style="left:166.5px;top:300.5px;line-height:1;width:197.5px;overflow:hidden">Проектирование</div>
<div class="cell b" style="left:376.8px;top:300.5px;line-height:1;">1.1</div>
<div class="cell b" style="left:360px;width:200px;text-align:right;top:300.5px;line-height:1;font-size:15.2px">100,00</div>
<div class="cell b" style="left:586.2px;top:300.5px;line-height:1;">Завершена</div>
<div class="cell b" style="left:561px;width:200px;text-align:right;top:300.5px;line-height:1;font-size:15.2px">75,00</div>
<div class="cell b" style="left:787px;top:300.5px;line-height:1;">День</div>
<div class="cell b" style="left:840.8px;width:200px;text-align:center;top:300.5px;line-height:1;font-size:15.2px">01.07.2024</div>
<div class="cell b" style="left:1008.3px;width:200px;text-align:center;top:300.5px;line-height:1;font-size:15.2px">11.10.2024</div>
<div class="cell b" style="left:1164.1px;width:200px;text-align:center;top:300.5px;line-height:1;font-size:15.2px">01.11.2024</div>
<div class="cell b" style="left:1317.6px;width:200px;text-align:center;top:300.5px;line-height:1;font-size:15.2px">13.02.2025</div>
<div class="cell" style="left:5px;top:324.3px;line-height:1;width:52px;text-align:center;font-weight:normal;color:#444;font-size:15px">4</div>
<svg class="ic" style="left:168px;top:324px" width="14" height="14" viewBox="0 0 14 14"><path d="M7 0.8 L13.2 7 L7 13.2 L0.8 7 Z" fill="#34b034" stroke="#1c3c1c" stroke-width="1.2"/></svg>
<div class="cell" style="left:191px;top:324.3px;line-height:1;width:173px;overflow:hidden;font-size:15.3px">Начало проектирования</div>
<div class="cell" style="left:376.8px;top:324.3px;line-height:1;">1.1.1</div>
<div class="cell" style="left:361px;width:200px;text-align:right;top:324.3px;line-height:1;">100,00</div>
<div class="cell" style="left:585px;top:324.3px;line-height:1;">Завершена</div>
<div class="cell" style="left:785.5px;top:324.3px;line-height:1;">День</div>
<div class="cell" style="left:840.8px;width:200px;text-align:center;top:324.3px;line-height:1;font-size:15.3px">01.07.2024</div>
<div class="cell" style="left:1008.3px;width:200px;text-align:center;top:324.3px;line-height:1;font-size:15.3px">01.07.2024</div>
<div class="cell" style="left:1164.1px;width:200px;text-align:center;top:324.3px;line-height:1;font-size:15.3px">01.11.2024</div>
<div class="cell" style="left:1317.6px;width:200px;text-align:center;top:324.3px;line-height:1;font-size:15.3px">01.11.2024</div>
<div class="cell" style="left:5px;top:348.0px;line-height:1;width:52px;text-align:center;font-weight:normal;color:#444;font-size:15px">5</div>
<svg class="ic" style="left:167.5px;top:348px" width="16" height="14" viewBox="0 0 16 14"><path d="M5.5 0.5 H14.5 V7.5 H9.5" fill="none" stroke="#c02026" stroke-width="1.1"/><line x1="5" y1="0.75" x2="14.5" y2="0.75" stroke="#300" stroke-width="1.3"/><path d="M0.6 2.8 H3.5 M0.6 2.8 V13.4 H10.4 V10" fill="none" stroke="#c02026" stroke-width="1.2"/><line x1="0.5" y1="2.6" x2="3.6" y2="2.6" stroke="#300" stroke-width="1.2"/><path d="M3 10.5 L7.5 6" stroke="#d83030" stroke-width="1.1"/><path d="M5 5 H8.5 V8.5 Z" fill="#d83030"/></svg>
<div class="cell" style="left:191px;top:348.0px;line-height:1;width:173px;overflow:hidden;font-size:15.3px">Обследование территории</div>
<div class="cell" style="left:376.8px;top:348.0px;line-height:1;">1.1.2</div>
<div class="cell" style="left:428.5px;top:348.0px;line-height:1;">4</div>
<div class="cell" style="left:361px;width:200px;text-align:right;top:348.0px;line-height:1;">100,00</div>
<div class="cell" style="left:585px;top:348.0px;line-height:1;">Завершена</div>
<div class="cell" style="left:563px;width:200px;text-align:right;top:348.0px;line-height:1;">24,00</div>
<div class="cell" style="left:785.5px;top:348.0px;line-height:1;">День</div>
<div class="cell" style="left:840.8px;width:200px;text-align:center;top:348.0px;line-height:1;font-size:15.3px">01.07.2024</div>
<div class="cell" style="left:1008.3px;width:200px;text-align:center;top:348.0px;line-height:1;font-size:15.3px">01.08.2024</div>
<div class="cell" style="left:1164.1px;width:200px;text-align:center;top:348.0px;line-height:1;font-size:15.3px">01.11.2024</div>
<div class="cell" style="left:1317.6px;width:200px;text-align:center;top:348.0px;line-height:1;font-size:15.3px">04.12.2024</div>
<div class="cell" style="left:5px;top:371.8px;line-height:1;width:52px;text-align:center;font-weight:normal;color:#444;font-size:15px">6</div>
<svg class="ic" style="left:167.5px;top:372px" width="16" height="14" viewBox="0 0 16 14"><path d="M5.5 0.5 H14.5 V7.5 H9.5" fill="none" stroke="#c02026" stroke-width="1.1"/><line x1="5" y1="0.75" x2="14.5" y2="0.75" stroke="#300" stroke-width="1.3"/><path d="M0.6 2.8 H3.5 M0.6 2.8 V13.4 H10.4 V10" fill="none" stroke="#c02026" stroke-width="1.2"/><line x1="0.5" y1="2.6" x2="3.6" y2="2.6" stroke="#300" stroke-width="1.2"/><path d="M3 10.5 L7.5 6" stroke="#d83030" stroke-width="1.1"/><path d="M5 5 H8.5 V8.5 Z" fill="#d83030"/></svg>
<div class="cell" style="left:191px;top:371.8px;line-height:1;width:173px;overflow:hidden;font-size:15.3px">Создание комплекта проектной</div>
<div class="cell" style="left:376.8px;top:371.8px;line-height:1;">1.1.3</div>
<div class="cell" style="left:428.5px;top:371.8px;line-height:1;">5</div>
<div class="cell" style="left:361px;width:200px;text-align:right;top:371.8px;line-height:1;">100,00</div>
<div class="cell" style="left:585px;top:371.8px;line-height:1;">Завершена</div>
<div class="cell" style="left:563px;width:200px;text-align:right;top:371.8px;line-height:1;">39,00</div>
<div class="cell" style="left:785.5px;top:371.8px;line-height:1;">День</div>
<div class="cell" style="left:840.8px;width:200px;text-align:center;top:371.8px;line-height:1;font-size:15.3px">02.08.2024</div>
<div class="cell" style="left:1008.3px;width:200px;text-align:center;top:371.8px;line-height:1;font-size:15.3px">25.09.2024</div>
<div class="cell" style="left:1164.1px;width:200px;text-align:center;top:371.8px;line-height:1;font-size:15.3px">05.12.2024</div>
<div class="cell" style="left:1317.6px;width:200px;text-align:center;top:371.8px;line-height:1;font-size:15.3px">28.01.2025</div>
<div class="cell" style="left:5px;top:395.5px;line-height:1;width:52px;text-align:center;font-weight:normal;color:#444;font-size:15px">7</div>
<svg class="ic" style="left:167.5px;top:396px" width="16" height="14" viewBox="0 0 16 14"><path d="M5.5 0.5 H14.5 V7.5 H9.5" fill="none" stroke="#c02026" stroke-width="1.1"/><line x1="5" y1="0.75" x2="14.5" y2="0.75" stroke="#300" stroke-width="1.3"/><path d="M0.6 2.8 H3.5 M0.6 2.8 V13.4 H10.4 V10" fill="none" stroke="#c02026" stroke-width="1.2"/><line x1="0.5" y1="2.6" x2="3.6" y2="2.6" stroke="#300" stroke-width="1.2"/><path d="M3 10.5 L7.5 6" stroke="#d83030" stroke-width="1.1"/><path d="M5 5 H8.5 V8.5 Z" fill="#d83030"/></svg>
<div class="cell" style="left:191px;top:395.5px;line-height:1;width:173px;overflow:hidden;font-size:15.3px">Утверждение комплекта</div>
<div class="cell" style="left:376.8px;top:395.5px;line-height:1;">1.1.4</div>
<div class="cell" style="left:428.5px;top:395.5px;line-height:1;">6</div>
<div class="cell" style="left:361px;width:200px;text-align:right;top:395.5px;line-height:1;">100,00</div>
<div class="cell" style="left:585px;top:395.5px;line-height:1;">Завершена</div>
<div class="cell" style="left:563px;width:200px;text-align:right;top:395.5px;line-height:1;">12,00</div>
<div class="cell" style="left:785.5px;top:395.5px;line-height:1;">День</div>
<div class="cell" style="left:840.8px;width:200px;text-align:center;top:395.5px;line-height:1;font-size:15.3px">26.09.2024</div>
<div class="cell" style="left:1008.3px;width:200px;text-align:center;top:395.5px;line-height:1;font-size:15.3px">11.10.2024</div>
<div class="cell" style="left:1164.1px;width:200px;text-align:center;top:395.5px;line-height:1;font-size:15.3px">29.01.2025</div>
<div class="cell" style="left:1317.6px;width:200px;text-align:center;top:395.5px;line-height:1;font-size:15.3px">13.02.2025</div>
<div class="cell" style="left:5px;top:419.3px;line-height:1;width:52px;text-align:center;font-weight:normal;color:#444;font-size:15px">8</div>
<svg class="ic" style="left:167.5px;top:420px" width="16" height="14" viewBox="0 0 16 14"><path d="M5.5 0.5 H14.5 V7.5 H9.5" fill="none" stroke="#c02026" stroke-width="1.1"/><line x1="5" y1="0.75" x2="14.5" y2="0.75" stroke="#300" stroke-width="1.3"/><path d="M0.6 2.8 H3.5 M0.6 2.8 V13.4 H10.4 V10" fill="none" stroke="#c02026" stroke-width="1.2"/><line x1="0.5" y1="2.6" x2="3.6" y2="2.6" stroke="#300" stroke-width="1.2"/><path d="M3 10.5 L7.5 6" stroke="#d83030" stroke-width="1.1"/><path d="M5 5 H8.5 V8.5 Z" fill="#d83030"/></svg>
<div class="cell" style="left:191px;top:419.3px;line-height:1;width:173px;overflow:hidden;font-size:15.3px">Управление этапом проектирования</div>
<div class="cell" style="left:376.8px;top:419.3px;line-height:1;">1.1.5</div>
<div class="cell" style="left:428.5px;top:419.3px;line-height:1;">5НН</div>
<div class="cell" style="left:361px;width:200px;text-align:right;top:419.3px;line-height:1;">100,00</div>
<div class="cell" style="left:585px;top:419.3px;line-height:1;">Завершена</div>
<div class="cell" style="left:563px;width:200px;text-align:right;top:419.3px;line-height:1;">69,00</div>
<div class="cell" style="left:785.5px;top:419.3px;line-height:1;">День</div>
<div class="cell" style="left:840.8px;width:200px;text-align:center;top:419.3px;line-height:1;font-size:15.3px">01.07.2024</div>
<div class="cell" style="left:1008.3px;width:200px;text-align:center;top:419.3px;line-height:1;font-size:15.3px">03.10.2024</div>
<div class="cell" style="left:1164.1px;width:200px;text-align:center;top:419.3px;line-height:1;font-size:15.3px">01.11.2024</div>
<div class="cell" style="left:1317.6px;width:200px;text-align:center;top:419.3px;line-height:1;font-size:15.3px">05.02.2025</div>
<div class="cell" style="left:5px;top:443.0px;line-height:1;width:52px;text-align:center;font-weight:normal;color:#444;font-size:15px">9</div>
<svg class="ic" style="left:168px;top:442px" width="14" height="14" viewBox="0 0 14 14"><path d="M7 0.8 L13.2 7 L7 13.2 L0.8 7 Z" fill="#34b034" stroke="#1c3c1c" stroke-width="1.2"/></svg>
<div class="cell" style="left:191px;top:443.0px;line-height:1;width:173px;overflow:hidden;font-size:15.3px">Окончание проектирования</div>
<div class="cell" style="left:376.8px;top:443.0px;line-height:1;">1.1.6</div>
<div class="cell" style="left:428.5px;top:443.0px;line-height:1;">7;8</div>
<div class="cell" style="left:361px;width:200px;text-align:right;top:443.0px;line-height:1;">100,00</div>
<div class="cell" style="left:585px;top:443.0px;line-height:1;">Завершена</div>
<div class="cell" style="left:840.8px;width:200px;text-align:center;top:443.0px;line-height:1;font-size:15.3px">11.10.2024</div>
<div class="cell" style="left:1008.3px;width:200px;text-align:center;top:443.0px;line-height:1;font-size:15.3px">11.10.2024</div>
<div class="cell" style="left:1164.1px;width:200px;text-align:center;top:443.0px;line-height:1;font-size:15.3px">13.02.2025</div>
<div class="cell" style="left:1317.6px;width:200px;text-align:center;top:443.0px;line-height:1;font-size:15.3px">13.02.2025</div>
<div class="cell b" style="left:5px;top:466.8px;line-height:1;width:52px;text-align:center;font-weight:normal;color:#444;font-size:15px">10</div>
<svg class="ic" style="left:116px;top:468px" width="12" height="11" viewBox="0 0 12 11"><circle cx="5.75" cy="5.5" r="5" fill="#fff" stroke="#bdbdbd" stroke-width="1.2"/><line x1="3" y1="5.5" x2="8.5" y2="5.5" stroke="#7a7a7a" stroke-width="1.4"/></svg>
<svg class="ic" style="left:139px;top:466.5px" width="19" height="15" viewBox="0 0 19 15"><defs><linearGradient id="fy" x1="0" y1="0" x2="0" y2="1"><stop offset="0" stop-color="#fbf7a0"/><stop offset="1" stop-color="#f8d868"/></linearGradient><linearGradient id="fyb" x1="0" y1="0" x2="0" y2="1"><stop offset="0" stop-color="#fffbd8"/><stop offset="1" stop-color="#f4e8a0"/></linearGradient></defs><path d="M1.8 14 V2.5 Q1.8 0.6 3.6 0.6 H7.6 Q9 0.6 9.6 2 L10.2 3 H16.6 Q17.8 3 17.8 4.2 V14 Z" fill="url(#fyb)" stroke="#c8a040" stroke-width="1"/><path d="M0.6 6.6 H15.4 Q16 6.6 16.2 7.4 L17.8 14.2 H2.6 Z" fill="url(#fy)" stroke="#c09838" stroke-width="1"/></svg>
<div class="cell b" style="left:166.5px;top:466.8px;line-height:1;width:197.5px;overflow:hidden">Поставка комплектующих</div>
<div class="cell b" style="left:376.8px;top:466.8px;line-height:1;">1.2</div>
<div class="cell b" style="left:429.5px;top:466.8px;line-height:1;">3</div>
<div class="cell b" style="left:360px;width:200px;text-align:right;top:466.8px;line-height:1;font-size:15.2px">100,00</div>
<div class="cell b" style="left:586.2px;top:466.8px;line-height:1;">Завершена</div>
<div class="cell b" style="left:561px;width:200px;text-align:right;top:466.8px;line-height:1;font-size:15.2px">15,00</div>
<div class="cell b" style="left:787px;top:466.8px;line-height:1;">День</div>
<div class="cell b" style="left:840.8px;width:200px;text-align:center;top:466.8px;line-height:1;font-size:15.2px">11.10.2024</div>
<div class="cell b" style="left:1008.3px;width:200px;text-align:center;top:466.8px;line-height:1;font-size:15.2px">01.11.2024</div>
<div class="cell b" style="left:1164.1px;width:200px;text-align:center;top:466.8px;line-height:1;font-size:15.2px">13.02.2025</div>
<div class="cell b" style="left:1317.6px;width:200px;text-align:center;top:466.8px;line-height:1;font-size:15.2px">25.03.2025</div>
<div class="cell" style="left:5px;top:490.5px;line-height:1;width:52px;text-align:center;font-weight:normal;color:#444;font-size:15px">11</div>
<svg class="ic" style="left:168px;top:490px" width="14" height="14" viewBox="0 0 14 14"><path d="M7 0.8 L13.2 7 L7 13.2 L0.8 7 Z" fill="#34b034" stroke="#1c3c1c" stroke-width="1.2"/></svg>
<div class="cell" style="left:191px;top:490.5px;line-height:1;width:173px;overflow:hidden;font-size:15.3px">Начало поставки</div>
<div class="cell" style="left:376.8px;top:490.5px;line-height:1;">1.2.1</div>
<div class="cell" style="left:428.5px;top:490.5px;line-height:1;">9</div>
<div class="cell" style="left:361px;width:200px;text-align:right;top:490.5px;line-height:1;">100,00</div>
<div class="cell" style="left:585px;top:490.5px;line-height:1;">Завершена</div>
<div class="cell" style="left:840.8px;width:200px;text-align:center;top:490.5px;line-height:1;font-size:15.3px">11.10.2024</div>
<div class="cell" style="left:1008.3px;width:200px;text-align:center;top:490.5px;line-height:1;font-size:15.3px">11.10.2024</div>
<div class="cell" style="left:1164.1px;width:200px;text-align:center;top:490.5px;line-height:1;font-size:15.3px">13.02.2025</div>
<div class="cell" style="left:1317.6px;width:200px;text-align:center;top:490.5px;line-height:1;font-size:15.3px">13.02.2025</div>
<div class="cell" style="left:5px;top:514.3px;line-height:1;width:52px;text-align:center;font-weight:normal;color:#444;font-size:15px">12</div>
<svg class="ic" style="left:167.5px;top:515px" width="16" height="14" viewBox="0 0 16 14"><path d="M5.5 0.5 H14.5 V7.5 H9.5" fill="none" stroke="#c02026" stroke-width="1.1"/><line x1="5" y1="0.75" x2="14.5" y2="0.75" stroke="#300" stroke-width="1.3"/><path d="M0.6 2.8 H3.5 M0.6 2.8 V13.4 H10.4 V10" fill="none" stroke="#c02026" stroke-width="1.2"/><line x1="0.5" y1="2.6" x2="3.6" y2="2.6" stroke="#300" stroke-width="1.2"/><path d="M3 10.5 L7.5 6" stroke="#d83030" stroke-width="1.1"/><path d="M5 5 H8.5 V8.5 Z" fill="#d83030"/></svg>
<div class="cell" style="left:191px;top:514.3px;line-height:1;width:173px;overflow:hidden;font-size:15.3px">Закупка</div>
<div class="cell" style="left:376.8px;top:514.3px;line-height:1;">1.2.2</div>
<div class="cell" style="left:428.5px;top:514.3px;line-height:1;">11</div>
<div class="cell" style="left:361px;width:200px;text-align:right;top:514.3px;line-height:1;">100,00</div>
<div class="cell" style="left:585px;top:514.3px;line-height:1;">Завершена</div>
<div class="cell" style="left:563px;width:200px;text-align:right;top:514.3px;line-height:1;">4,00</div>
<div class="cell" style="left:785.5px;top:514.3px;line-height:1;">День</div>
<div class="cell" style="left:840.8px;width:200px;text-align:center;top:514.3px;line-height:1;font-size:15.3px">14.10.2024</div>
<div class="cell" style="left:1008.3px;width:200px;text-align:center;top:514.3px;line-height:1;font-size:15.3px">17.10.2024</div>
<div class="cell" style="left:1164.1px;width:200px;text-align:center;top:514.3px;line-height:1;font-size:15.3px">14.02.2025</div>
<div class="cell" style="left:1317.6px;width:200px;text-align:center;top:514.3px;line-height:1;font-size:15.3px">19.02.2025</div>
<div class="cell" style="left:5px;top:538.0px;line-height:1;width:52px;text-align:center;font-weight:normal;color:#444;font-size:15px">13</div>
<svg class="ic" style="left:167.5px;top:538px" width="16" height="14" viewBox="0 0 16 14"><path d="M5.5 0.5 H14.5 V7.5 H9.5" fill="none" stroke="#c02026" stroke-width="1.1"/><line x1="5" y1="0.75" x2="14.5" y2="0.75" stroke="#300" stroke-width="1.3"/><path d="M0.6 2.8 H3.5 M0.6 2.8 V13.4 H10.4 V10" fill="none" stroke="#c02026" stroke-width="1.2"/><line x1="0.5" y1="2.6" x2="3.6" y2="2.6" stroke="#300" stroke-width="1.2"/><path d="M3 10.5 L7.5 6" stroke="#d83030" stroke-width="1.1"/><path d="M5 5 H8.5 V8.5 Z" fill="#d83030"/></svg>
<div class="cell" style="left:191px;top:538.0px;line-height:1;width:173px;overflow:hidden;font-size:15.3px">Поставка комплектующих 1</div>
<div class="cell" style="left:376.8px;top:538.0px;line-height:1;">1.2.3</div>
<div class="cell" style="left:428.5px;top:538.0px;line-height:1;">12</div>
<div class="cell" style="left:361px;width:200px;text-align:right;top:538.0px;line-height:1;">100,00</div>
<div class="cell" style="left:585px;top:538.0px;line-height:1;">Завершена</div>
<div class="cell" style="left:563px;width:200px;text-align:right;top:538.0px;line-height:1;">4,00</div>
<div class="cell" style="left:785.5px;top:538.0px;line-height:1;">День</div>
<div class="cell" style="left:840.8px;width:200px;text-align:center;top:538.0px;line-height:1;font-size:15.3px">18.10.2024</div>
<div class="cell" style="left:1008.3px;width:200px;text-align:center;top:538.0px;line-height:1;font-size:15.3px">23.10.2024</div>
<div class="cell" style="left:1164.1px;width:200px;text-align:center;top:538.0px;line-height:1;font-size:15.3px">20.02.2025</div>
<div class="cell" style="left:1317.6px;width:200px;text-align:center;top:538.0px;line-height:1;font-size:15.3px">25.02.2025</div>
<div class="cell" style="left:5px;top:561.8px;line-height:1;width:52px;text-align:center;font-weight:normal;color:#444;font-size:15px">14</div>
<svg class="ic" style="left:167.5px;top:562px" width="16" height="14" viewBox="0 0 16 14"><path d="M5.5 0.5 H14.5 V7.5 H9.5" fill="none" stroke="#c02026" stroke-width="1.1"/><line x1="5" y1="0.75" x2="14.5" y2="0.75" stroke="#300" stroke-width="1.3"/><path d="M0.6 2.8 H3.5 M0.6 2.8 V13.4 H10.4 V10" fill="none" stroke="#c02026" stroke-width="1.2"/><line x1="0.5" y1="2.6" x2="3.6" y2="2.6" stroke="#300" stroke-width="1.2"/><path d="M3 10.5 L7.5 6" stroke="#d83030" stroke-width="1.1"/><path d="M5 5 H8.5 V8.5 Z" fill="#d83030"/></svg>
<div class="cell" style="left:191px;top:561.8px;line-height:1;width:173px;overflow:hidden;font-size:15.3px">Поставка комплектующих 2</div>
<div class="cell" style="left:376.8px;top:561.8px;line-height:1;">1.2.4</div>
<div class="cell" style="left:428.5px;top:561.8px;line-height:1;">13</div>
<div class="cell" style="left:361px;width:200px;text-align:right;top:561.8px;line-height:1;">100,00</div>
<div class="cell" style="left:585px;top:561.8px;line-height:1;">Завершена</div>
<div class="cell" style="left:563px;width:200px;text-align:right;top:561.8px;line-height:1;">5,00</div>
<div class="cell" style="left:785.5px;top:561.8px;line-height:1;">День</div>
<div class="cell" style="left:840.8px;width:200px;text-align:center;top:561.8px;line-height:1;font-size:15.3px">24.10.2024</div>
<div class="cell" style="left:1008.3px;width:200px;text-align:center;top:561.8px;line-height:1;font-size:15.3px">30.10.2024</div>
<div class="cell" style="left:1164.1px;width:200px;text-align:center;top:561.8px;line-height:1;font-size:15.3px">26.02.2025</div>
<div class="cell" style="left:1317.6px;width:200px;text-align:center;top:561.8px;line-height:1;font-size:15.3px">04.03.2025</div>
<div class="cell" style="left:5px;top:585.5px;line-height:1;width:52px;text-align:center;font-weight:normal;color:#444;font-size:15px">15</div>
<svg class="ic" style="left:167.5px;top:586px" width="16" height="14" viewBox="0 0 16 14"><path d="M5.5 0.5 H14.5 V7.5 H9.5" fill="none" stroke="#c02026" stroke-width="1.1"/><line x1="5" y1="0.75" x2="14.5" y2="0.75" stroke="#300" stroke-width="1.3"/><path d="M0.6 2.8 H3.5 M0.6 2.8 V13.4 H10.4 V10" fill="none" stroke="#c02026" stroke-width="1.2"/><line x1="0.5" y1="2.6" x2="3.6" y2="2.6" stroke="#300" stroke-width="1.2"/><path d="M3 10.5 L7.5 6" stroke="#d83030" stroke-width="1.1"/><path d="M5 5 H8.5 V8.5 Z" fill="#d83030"/></svg>
<div class="cell" style="left:191px;top:585.5px;line-height:1;width:173px;overflow:hidden;font-size:15.3px">Управление этапом поставки</div>
<div class="cell" style="left:376.8px;top:585.5px;line-height:1;">1.2.5</div>
<div class="cell" style="left:428.5px;top:585.5px;line-height:1;">14</div>
<div class="cell" style="left:361px;width:200px;text-align:right;top:585.5px;line-height:1;">100,00</div>
<div class="cell" style="left:585px;top:585.5px;line-height:1;">Завершена</div>
<div class="cell" style="left:563px;width:200px;text-align:right;top:585.5px;line-height:1;">15,00</div>
<div class="cell" style="left:785.5px;top:585.5px;line-height:1;">День</div>
<div class="cell" style="left:840.8px;width:200px;text-align:center;top:585.5px;line-height:1;font-size:15.3px">14.10.2024</div>
<div class="cell" style="left:1008.3px;width:200px;text-align:center;top:585.5px;line-height:1;font-size:15.3px">01.11.2024</div>
<div class="cell" style="left:1164.1px;width:200px;text-align:center;top:585.5px;line-height:1;font-size:15.3px">05.03.2025</div>
<div class="cell" style="left:1317.6px;width:200px;text-align:center;top:585.5px;line-height:1;font-size:15.3px">25.03.2025</div>
<div class="cell" style="left:5px;top:609.3px;line-height:1;width:52px;text-align:center;font-weight:normal;color:#444;font-size:15px">16</div>
<svg class="ic" style="left:168px;top:609px" width="14" height="14" viewBox="0 0 14 14"><path d="M7 0.8 L13.2 7 L7 13.2 L0.8 7 Z" fill="#34b034" stroke="#1c3c1c" stroke-width="1.2"/></svg>
<div class="cell" style="left:191px;top:609.3px;line-height:1;width:173px;overflow:hidden;font-size:15.3px">Окончание поставки</div>
<div class="cell" style="left:376.8px;top:609.3px;line-height:1;">1.2.6</div>
<div class="cell" style="left:428.5px;top:609.3px;line-height:1;">15</div>
<div class="cell" style="left:361px;width:200px;text-align:right;top:609.3px;line-height:1;">100,00</div>
<div class="cell" style="left:585px;top:609.3px;line-height:1;">Завершена</div>
<div class="cell" style="left:840.8px;width:200px;text-align:center;top:609.3px;line-height:1;font-size:15.3px">01.11.2024</div>
<div class="cell" style="left:1008.3px;width:200px;text-align:center;top:609.3px;line-height:1;font-size:15.3px">01.11.2024</div>
<div class="cell" style="left:1164.1px;width:200px;text-align:center;top:609.3px;line-height:1;font-size:15.3px">25.03.2025</div>
<div class="cell" style="left:1317.6px;width:200px;text-align:center;top:609.3px;line-height:1;font-size:15.3px">25.03.2025</div>
<div class="cell b" style="left:5px;top:633.0px;line-height:1;width:52px;text-align:center;font-weight:normal;color:#444;font-size:15px">17</div>
<svg class="ic" style="left:116px;top:634px" width="12" height="11" viewBox="0 0 12 11"><circle cx="5.75" cy="5.5" r="5" fill="#fff" stroke="#bdbdbd" stroke-width="1.2"/><line x1="3" y1="5.5" x2="8.5" y2="5.5" stroke="#7a7a7a" stroke-width="1.4"/></svg>
<svg class="ic" style="left:139px;top:632.5px" width="19" height="15" viewBox="0 0 19 15"><defs><linearGradient id="fy" x1="0" y1="0" x2="0" y2="1"><stop offset="0" stop-color="#fbf7a0"/><stop offset="1" stop-color="#f8d868"/></linearGradient><linearGradient id="fyb" x1="0" y1="0" x2="0" y2="1"><stop offset="0" stop-color="#fffbd8"/><stop offset="1" stop-color="#f4e8a0"/></linearGradient></defs><path d="M1.8 14 V2.5 Q1.8 0.6 3.6 0.6 H7.6 Q9 0.6 9.6 2 L10.2 3 H16.6 Q17.8 3 17.8 4.2 V14 Z" fill="url(#fyb)" stroke="#c8a040" stroke-width="1"/><path d="M0.6 6.6 H15.4 Q16 6.6 16.2 7.4 L17.8 14.2 H2.6 Z" fill="url(#fy)" stroke="#c09838" stroke-width="1"/></svg>
<div class="cell b" style="left:166.5px;top:633.0px;line-height:1;width:197.5px;overflow:hidden">Монтаж и установка системы</div>
<div class="cell b" style="left:376.8px;top:633.0px;line-height:1;">1.3</div>
<div class="cell b" style="left:429.5px;top:633.0px;line-height:1;">10</div>
<div class="cell b" style="left:360px;width:200px;text-align:right;top:633.0px;line-height:1;font-size:15.2px">36,84</div>
<div class="cell b" style="left:586.2px;top:633.0px;line-height:1;">Выполняется</div>
<div class="cell b" style="left:561px;width:200px;text-align:right;top:633.0px;line-height:1;font-size:15.2px">55,00</div>
<div class="cell b" style="left:787px;top:633.0px;line-height:1;">День</div>
<div class="cell b" style="left:840.8px;width:200px;text-align:center;top:633.0px;line-height:1;font-size:15.2px">04.11.2024</div>
<div class="cell b" style="left:1008.3px;width:200px;text-align:center;top:633.0px;line-height:1;font-size:15.2px">17.01.2025</div>
<div class="cell b" style="left:1164.1px;width:200px;text-align:center;top:633.0px;line-height:1;font-size:15.2px">26.03.2025</div>
<div class="cell b" style="left:1317.6px;width:200px;text-align:center;top:633.0px;line-height:1;font-size:15.2px">10.06.2025</div>
<div class="cell" style="left:5px;top:656.8px;line-height:1;width:52px;text-align:center;font-weight:normal;color:#444;font-size:15px">18</div>
<svg class="ic" style="left:167.5px;top:657px" width="16" height="14" viewBox="0 0 16 14"><path d="M5.5 0.5 H14.5 V7.5 H9.5" fill="none" stroke="#c02026" stroke-width="1.1"/><line x1="5" y1="0.75" x2="14.5" y2="0.75" stroke="#300" stroke-width="1.3"/><path d="M0.6 2.8 H3.5 M0.6 2.8 V13.4 H10.4 V10" fill="none" stroke="#c02026" stroke-width="1.2"/><line x1="0.5" y1="2.6" x2="3.6" y2="2.6" stroke="#300" stroke-width="1.2"/><path d="M3 10.5 L7.5 6" stroke="#d83030" stroke-width="1.1"/><path d="M5 5 H8.5 V8.5 Z" fill="#d83030"/></svg>
<div class="cell" style="left:191px;top:656.8px;line-height:1;width:173px;overflow:hidden;font-size:15.3px">Монтаж системы</div>
<div class="cell" style="left:376.8px;top:656.8px;line-height:1;">1.3.1</div>
<div class="cell" style="left:428.5px;top:656.8px;line-height:1;">16</div>
<div class="cell" style="left:361px;width:200px;text-align:right;top:656.8px;line-height:1;">50,00</div>
<div class="cell" style="left:585px;top:656.8px;line-height:1;">Выполняется</div>
<div class="cell" style="left:563px;width:200px;text-align:right;top:656.8px;line-height:1;">30,00</div>
<div class="cell" style="left:785.5px;top:656.8px;line-height:1;">День</div>
<div class="cell" style="left:840.8px;width:200px;text-align:center;top:656.8px;line-height:1;font-size:15.3px">04.11.2024</div>
<div class="cell" style="left:1008.3px;width:200px;text-align:center;top:656.8px;line-height:1;font-size:15.3px">13.12.2024</div>
<div class="cell" style="left:1164.1px;width:200px;text-align:center;top:656.8px;line-height:1;font-size:15.3px">26.03.2025</div>
<div class="cell" style="left:1317.6px;width:200px;text-align:center;top:656.8px;line-height:1;font-size:15.3px">06.05.2025</div>
<div class="cell" style="left:5px;top:680.5px;line-height:1;width:52px;text-align:center;font-weight:normal;color:#444;font-size:15px">19</div>
<svg class="ic" style="left:167.5px;top:681px" width="16" height="14" viewBox="0 0 16 14"><path d="M5.5 0.5 H14.5 V7.5 H9.5" fill="none" stroke="#c02026" stroke-width="1.1"/><line x1="5" y1="0.75" x2="14.5" y2="0.75" stroke="#300" stroke-width="1.3"/><path d="M0.6 2.8 H3.5 M0.6 2.8 V13.4 H10.4 V10" fill="none" stroke="#c02026" stroke-width="1.2"/><line x1="0.5" y1="2.6" x2="3.6" y2="2.6" stroke="#300" stroke-width="1.2"/><path d="M3 10.5 L7.5 6" stroke="#d83030" stroke-width="1.1"/><path d="M5 5 H8.5 V8.5 Z" fill="#d83030"/></svg>
<div class="cell" style="left:191px;top:680.5px;line-height:1;width:173px;overflow:hidden;font-size:15.3px">Установка системы</div>
<div class="cell" style="left:376.8px;top:680.5px;line-height:1;">1.3.2</div>
<div class="cell" style="left:428.5px;top:680.5px;line-height:1;">18</div>
<div class="cell" style="left:563px;width:200px;text-align:right;top:680.5px;line-height:1;">25,00</div>
<div class="cell" style="left:785.5px;top:680.5px;line-height:1;">День</div>
<div class="cell" style="left:840.8px;width:200px;text-align:center;top:680.5px;line-height:1;font-size:15.3px">16.12.2024</div>
<div class="cell" style="left:1008.3px;width:200px;text-align:center;top:680.5px;line-height:1;font-size:15.3px">17.01.2025</div>
<div class="cell" style="left:1164.1px;width:200px;text-align:center;top:680.5px;line-height:1;font-size:15.3px">07.05.2025</div>
<div class="cell" style="left:1317.6px;width:200px;text-align:center;top:680.5px;line-height:1;font-size:15.3px">10.06.2025</div>
<div class="cell" style="left:5px;top:704.3px;line-height:1;width:52px;text-align:center;font-weight:normal;color:#444;font-size:15px">20</div>
<svg class="ic" style="left:167.5px;top:705px" width="16" height="14" viewBox="0 0 16 14"><path d="M5.5 0.5 H14.5 V7.5 H9.5" fill="none" stroke="#c02026" stroke-width="1.1"/><line x1="5" y1="0.75" x2="14.5" y2="0.75" stroke="#300" stroke-width="1.3"/><path d="M0.6 2.8 H3.5 M0.6 2.8 V13.4 H10.4 V10" fill="none" stroke="#c02026" stroke-width="1.2"/><line x1="0.5" y1="2.6" x2="3.6" y2="2.6" stroke="#300" stroke-width="1.2"/><path d="M3 10.5 L7.5 6" stroke="#d83030" stroke-width="1.1"/><path d="M5 5 H8.5 V8.5 Z" fill="#d83030"/></svg>
<div class="cell" style="left:191px;top:704.3px;line-height:1;width:173px;overflow:hidden;font-size:15.3px">Управление этапом монтажа</div>
<div class="cell" style="left:376.8px;top:704.3px;line-height:1;">1.3.3</div>
<div class="cell" style="left:428.5px;top:704.3px;line-height:1;">18НН</div>
<div class="cell" style="left:361px;width:200px;text-align:right;top:704.3px;line-height:1;">50,00</div>
<div class="cell" style="left:585px;top:704.3px;line-height:1;">Выполняется</div>
<div class="cell" style="left:563px;width:200px;text-align:right;top:704.3px;line-height:1;">40,00</div>
<div class="cell" style="left:785.5px;top:704.3px;line-height:1;">День</div>
<div class="cell" style="left:840.8px;width:200px;text-align:center;top:704.3px;line-height:1;font-size:15.3px">04.11.2024</div>
<div class="cell" style="left:1008.3px;width:200px;text-align:center;top:704.3px;line-height:1;font-size:15.3px">27.12.2024</div>
<div class="cell" style="left:1164.1px;width:200px;text-align:center;top:704.3px;line-height:1;font-size:15.3px">26.03.2025</div>
<div class="cell" style="left:1317.6px;width:200px;text-align:center;top:704.3px;line-height:1;font-size:15.3px">20.05.2025</div>
<div class="cell b" style="left:5px;top:728.0px;line-height:1;width:52px;text-align:center;font-weight:normal;color:#444;font-size:15px">21</div>
<svg class="ic" style="left:116px;top:730px" width="12" height="11" viewBox="0 0 12 11"><circle cx="5.75" cy="5.5" r="5" fill="#fff" stroke="#bdbdbd" stroke-width="1.2"/><line x1="3" y1="5.5" x2="8.5" y2="5.5" stroke="#7a7a7a" stroke-width="1.4"/></svg>
<svg class="ic" style="left:139px;top:728.5px" width="19" height="15" viewBox="0 0 19 15"><defs><linearGradient id="fy" x1="0" y1="0" x2="0" y2="1"><stop offset="0" stop-color="#fbf7a0"/><stop offset="1" stop-color="#f8d868"/></linearGradient><linearGradient id="fyb" x1="0" y1="0" x2="0" y2="1"><stop offset="0" stop-color="#fffbd8"/><stop offset="1" stop-color="#f4e8a0"/></linearGradient></defs><path d="M1.8 14 V2.5 Q1.8 0.6 3.6 0.6 H7.6 Q9 0.6 9.6 2 L10.2 3 H16.6 Q17.8 3 17.8 4.2 V14 Z" fill="url(#fyb)" stroke="#c8a040" stroke-width="1"/><path d="M0.6 6.6 H15.4 Q16 6.6 16.2 7.4 L17.8 14.2 H2.6 Z" fill="url(#fy)" stroke="#c09838" stroke-width="1"/></svg>
<div class="cell b" style="left:166.5px;top:728.0px;line-height:1;width:197.5px;overflow:hidden">Пусконаладочные работы</div>
<div class="cell b" style="left:376.8px;top:728.0px;line-height:1;">1.4</div>
<div class="cell b" style="left:429.5px;top:728.0px;line-height:1;">17</div>
<div class="cell b" style="left:561px;width:200px;text-align:right;top:728.0px;line-height:1;font-size:15.2px">15,00</div>
<div class="cell b" style="left:787px;top:728.0px;line-height:1;">День</div>
<div class="cell b" style="left:840.8px;width:200px;text-align:center;top:728.0px;line-height:1;font-size:15.2px">20.01.2025</div>
<div class="cell b" style="left:1008.3px;width:200px;text-align:center;top:728.0px;line-height:1;font-size:15.2px">07.02.2025</div>
<div class="cell b" style="left:1164.1px;width:200px;text-align:center;top:728.0px;line-height:1;font-size:15.2px">11.06.2025</div>
<div class="cell b" style="left:1317.6px;width:200px;text-align:center;top:728.0px;line-height:1;font-size:15.2px">01.07.2025</div>
<div class="cell" style="left:5px;top:751.8px;line-height:1;width:52px;text-align:center;font-weight:normal;color:#444;font-size:15px">22</div>
<svg class="ic" style="left:167.5px;top:752px" width="16" height="14" viewBox="0 0 16 14"><path d="M5.5 0.5 H14.5 V7.5 H9.5" fill="none" stroke="#c02026" stroke-width="1.1"/><line x1="5" y1="0.75" x2="14.5" y2="0.75" stroke="#300" stroke-width="1.3"/><path d="M0.6 2.8 H3.5 M0.6 2.8 V13.4 H10.4 V10" fill="none" stroke="#c02026" stroke-width="1.2"/><line x1="0.5" y1="2.6" x2="3.6" y2="2.6" stroke="#300" stroke-width="1.2"/><path d="M3 10.5 L7.5 6" stroke="#d83030" stroke-width="1.1"/><path d="M5 5 H8.5 V8.5 Z" fill="#d83030"/></svg>
<div class="cell" style="left:191px;top:751.8px;line-height:1;width:173px;overflow:hidden;font-size:15.3px">Пусконаладочные работы</div>
<div class="cell" style="left:376.8px;top:751.8px;line-height:1;">1.4.1</div>
<div class="cell" style="left:563px;width:200px;text-align:right;top:751.8px;line-height:1;">15,00</div>
<div class="cell" style="left:785.5px;top:751.8px;line-height:1;">День</div>
<div class="cell" style="left:840.8px;width:200px;text-align:center;top:751.8px;line-height:1;font-size:15.3px">20.01.2025</div>
<div class="cell" style="left:1008.3px;width:200px;text-align:center;top:751.8px;line-height:1;font-size:15.3px">07.02.2025</div>
<div class="cell" style="left:1164.1px;width:200px;text-align:center;top:751.8px;line-height:1;font-size:15.3px">11.06.2025</div>
<div class="cell" style="left:1317.6px;width:200px;text-align:center;top:751.8px;line-height:1;font-size:15.3px">01.07.2025</div>
<div class="cell" style="left:5px;top:775.5px;line-height:1;width:52px;text-align:center;font-weight:normal;color:#444;font-size:15px">23</div>
<svg class="ic" style="left:167.5px;top:776px" width="16" height="14" viewBox="0 0 16 14"><path d="M5.5 0.5 H14.5 V7.5 H9.5" fill="none" stroke="#c02026" stroke-width="1.1"/><line x1="5" y1="0.75" x2="14.5" y2="0.75" stroke="#300" stroke-width="1.3"/><path d="M0.6 2.8 H3.5 M0.6 2.8 V13.4 H10.4 V10" fill="none" stroke="#c02026" stroke-width="1.2"/><line x1="0.5" y1="2.6" x2="3.6" y2="2.6" stroke="#300" stroke-width="1.2"/><path d="M3 10.5 L7.5 6" stroke="#d83030" stroke-width="1.1"/><path d="M5 5 H8.5 V8.5 Z" fill="#d83030"/></svg>
<div class="cell" style="left:191px;top:775.5px;line-height:1;width:173px;overflow:hidden;font-size:15.3px">Управление этапом пусконаладки</div>
<div class="cell" style="left:376.8px;top:775.5px;line-height:1;">1.4.2</div>
<div class="cell" style="left:428.5px;top:775.5px;line-height:1;">22НН</div>
<div class="cell" style="left:563px;width:200px;text-align:right;top:775.5px;line-height:1;">15,00</div>
<div class="cell" style="left:785.5px;top:775.5px;line-height:1;">День</div>
<div class="cell" style="left:840.8px;width:200px;text-align:center;top:775.5px;line-height:1;font-size:15.3px">20.01.2025</div>
<div class="cell" style="left:1008.3px;width:200px;text-align:center;top:775.5px;line-height:1;font-size:15.3px">07.02.2025</div>
<div class="cell" style="left:1164.1px;width:200px;text-align:center;top:775.5px;line-height:1;font-size:15.3px">11.06.2025</div>
<div class="cell" style="left:1317.6px;width:200px;text-align:center;top:775.5px;line-height:1;font-size:15.3px">01.07.2025</div>
<div class="cell b" style="left:5px;top:799.3px;line-height:1;width:52px;text-align:center;font-weight:normal;color:#444;font-size:15px">24</div>
<svg class="ic" style="left:116px;top:801px" width="12" height="11" viewBox="0 0 12 11"><circle cx="5.75" cy="5.5" r="5" fill="#fff" stroke="#bdbdbd" stroke-width="1.2"/><line x1="3" y1="5.5" x2="8.5" y2="5.5" stroke="#7a7a7a" stroke-width="1.4"/></svg>
<svg class="ic" style="left:139px;top:799.5px" width="19" height="15" viewBox="0 0 19 15"><defs><linearGradient id="fy" x1="0" y1="0" x2="0" y2="1"><stop offset="0" stop-color="#fbf7a0"/><stop offset="1" stop-color="#f8d868"/></linearGradient><linearGradient id="fyb" x1="0" y1="0" x2="0" y2="1"><stop offset="0" stop-color="#fffbd8"/><stop offset="1" stop-color="#f4e8a0"/></linearGradient></defs><path d="M1.8 14 V2.5 Q1.8 0.6 3.6 0.6 H7.6 Q9 0.6 9.6 2 L10.2 3 H16.6 Q17.8 3 17.8 4.2 V14 Z" fill="url(#fyb)" stroke="#c8a040" stroke-width="1"/><path d="M0.6 6.6 H15.4 Q16 6.6 16.2 7.4 L17.8 14.2 H2.6 Z" fill="url(#fy)" stroke="#c09838" stroke-width="1"/></svg>
<div class="cell b" style="left:166.5px;top:799.3px;line-height:1;width:197.5px;overflow:hidden">Приемо-сдаточные испытания</div>
<div class="cell b" style="left:376.8px;top:799.3px;line-height:1;">1.5</div>
<div class="cell b" style="left:429.5px;top:799.3px;line-height:1;">21</div>
<div class="cell b" style="left:561px;width:200px;text-align:right;top:799.3px;line-height:1;font-size:15.2px">5,00</div>
<div class="cell b" style="left:787px;top:799.3px;line-height:1;">День</div>
<div class="cell b" style="left:840.8px;width:200px;text-align:center;top:799.3px;line-height:1;font-size:15.2px">10.02.2025</div>
<div class="cell b" style="left:1008.3px;width:200px;text-align:center;top:799.3px;line-height:1;font-size:15.2px">14.02.2025</div>
<div class="cell b" style="left:1164.1px;width:200px;text-align:center;top:799.3px;line-height:1;font-size:15.2px">02.07.2025</div>
<div class="cell b" style="left:1317.6px;width:200px;text-align:center;top:799.3px;line-height:1;font-size:15.2px">08.07.2025</div>
<div class="cell" style="left:5px;top:823.0px;line-height:1;width:52px;text-align:center;font-weight:normal;color:#444;font-size:15px">25</div>
<svg class="ic" style="left:167.5px;top:824px" width="16" height="14" viewBox="0 0 16 14"><path d="M5.5 0.5 H14.5 V7.5 H9.5" fill="none" stroke="#c02026" stroke-width="1.1"/><line x1="5" y1="0.75" x2="14.5" y2="0.75" stroke="#300" stroke-width="1.3"/><path d="M0.6 2.8 H3.5 M0.6 2.8 V13.4 H10.4 V10" fill="none" stroke="#c02026" stroke-width="1.2"/><line x1="0.5" y1="2.6" x2="3.6" y2="2.6" stroke="#300" stroke-width="1.2"/><path d="M3 10.5 L7.5 6" stroke="#d83030" stroke-width="1.1"/><path d="M5 5 H8.5 V8.5 Z" fill="#d83030"/></svg>
<div class="cell" style="left:191px;top:823.0px;line-height:1;width:173px;overflow:hidden;font-size:15.3px">Приемо-сдаточные испытания</div>
<div class="cell" style="left:376.8px;top:823.0px;line-height:1;">1.5.1</div>
<div class="cell" style="left:563px;width:200px;text-align:right;top:823.0px;line-height:1;">5,00</div>
<div class="cell" style="left:785.5px;top:823.0px;line-height:1;">День</div>
<div class="cell" style="left:840.8px;width:200px;text-align:center;top:823.0px;line-height:1;font-size:15.3px">10.02.2025</div>
<div class="cell" style="left:1008.3px;width:200px;text-align:center;top:823.0px;line-height:1;font-size:15.3px">14.02.2025</div>
<div class="cell" style="left:1164.1px;width:200px;text-align:center;top:823.0px;line-height:1;font-size:15.3px">02.07.2025</div>
<div class="cell" style="left:1317.6px;width:200px;text-align:center;top:823.0px;line-height:1;font-size:15.3px">08.07.2025</div>
<div class="cell" style="left:5px;top:846.8px;line-height:1;width:52px;text-align:center;font-weight:normal;color:#444;font-size:15px">26</div>
<svg class="ic" style="left:167.5px;top:847px" width="16" height="14" viewBox="0 0 16 14"><path d="M5.5 0.5 H14.5 V7.5 H9.5" fill="none" stroke="#c02026" stroke-width="1.1"/><line x1="5" y1="0.75" x2="14.5" y2="0.75" stroke="#300" stroke-width="1.3"/><path d="M0.6 2.8 H3.5 M0.6 2.8 V13.4 H10.4 V10" fill="none" stroke="#c02026" stroke-width="1.2"/><line x1="0.5" y1="2.6" x2="3.6" y2="2.6" stroke="#300" stroke-width="1.2"/><path d="M3 10.5 L7.5 6" stroke="#d83030" stroke-width="1.1"/><path d="M5 5 H8.5 V8.5 Z" fill="#d83030"/></svg>
<div class="cell" style="left:191px;top:846.8px;line-height:1;width:173px;overflow:hidden;font-size:15.3px">Управление этапом приемки</div>
<div class="cell" style="left:376.8px;top:846.8px;line-height:1;">1.5.2</div>
<div class="cell" style="left:428.5px;top:846.8px;line-height:1;">25НН</div>
<div class="cell" style="left:563px;width:200px;text-align:right;top:846.8px;line-height:1;">4,00</div>
<div class="cell" style="left:785.5px;top:846.8px;line-height:1;">День</div>
<div class="cell" style="left:840.8px;width:200px;text-align:center;top:846.8px;line-height:1;font-size:15.3px">10.02.2025</div>
<div class="cell" style="left:1008.3px;width:200px;text-align:center;top:846.8px;line-height:1;font-size:15.3px">13.02.2025</div>
<div class="cell" style="left:1164.1px;width:200px;text-align:center;top:846.8px;line-height:1;font-size:15.3px">02.07.2025</div>
<div class="cell" style="left:1317.6px;width:200px;text-align:center;top:846.8px;line-height:1;font-size:15.3px">07.07.2025</div>
<div class="abs" style="left:1515px;top:277px;width:245px;height:12px;background:#6e7f8f;border-radius:3px"></div>
<div class="abs" style="left:1515px;top:302px;width:245px;height:11px;background:#6e7f8f;border-radius:3px"></div>
<div class="abs" style="left:1517px;top:348px;width:100px;height:13px;background:#8bcdf7;border-radius:3px"></div>
<div class="abs" style="left:1620px;top:372px;width:140px;height:12px;background:#8bcdf7;border-radius:3px"></div>
<div class="abs" style="left:1516px;top:420px;width:244px;height:12px;background:#8bcdf7;border-radius:3px"></div>
<svg class="ic" style="left:1494px;top:318px" width="252" height="130" viewBox="0 0 252 130"><path d="M23.5 5 V17.5" stroke="#a8d0ec" stroke-width="1.6"/><path d="M24 13 H39.5 V28.5 H8.5 V108.5 H19" fill="none" stroke="#cdcdcd" stroke-width="1.2"/><path d="M8.5 36.5 H19" fill="none" stroke="#cdcdcd" stroke-width="1.2"/><path d="M18 33 L22.5 36.5 L18 40 Z" fill="#b4b4b4"/><path d="M18 105 L22.5 108.5 L18 112 Z" fill="#b4b4b4"/><path d="M123 37 Q127 37 127 41 V49.5 H111.5 V57 H121" fill="none" stroke="#cdcdcd" stroke-width="1.2"/><path d="M120.5 53.5 L125 57 L120.5 60.5 Z" fill="#b4b4b4"/></svg>
</body></html>
